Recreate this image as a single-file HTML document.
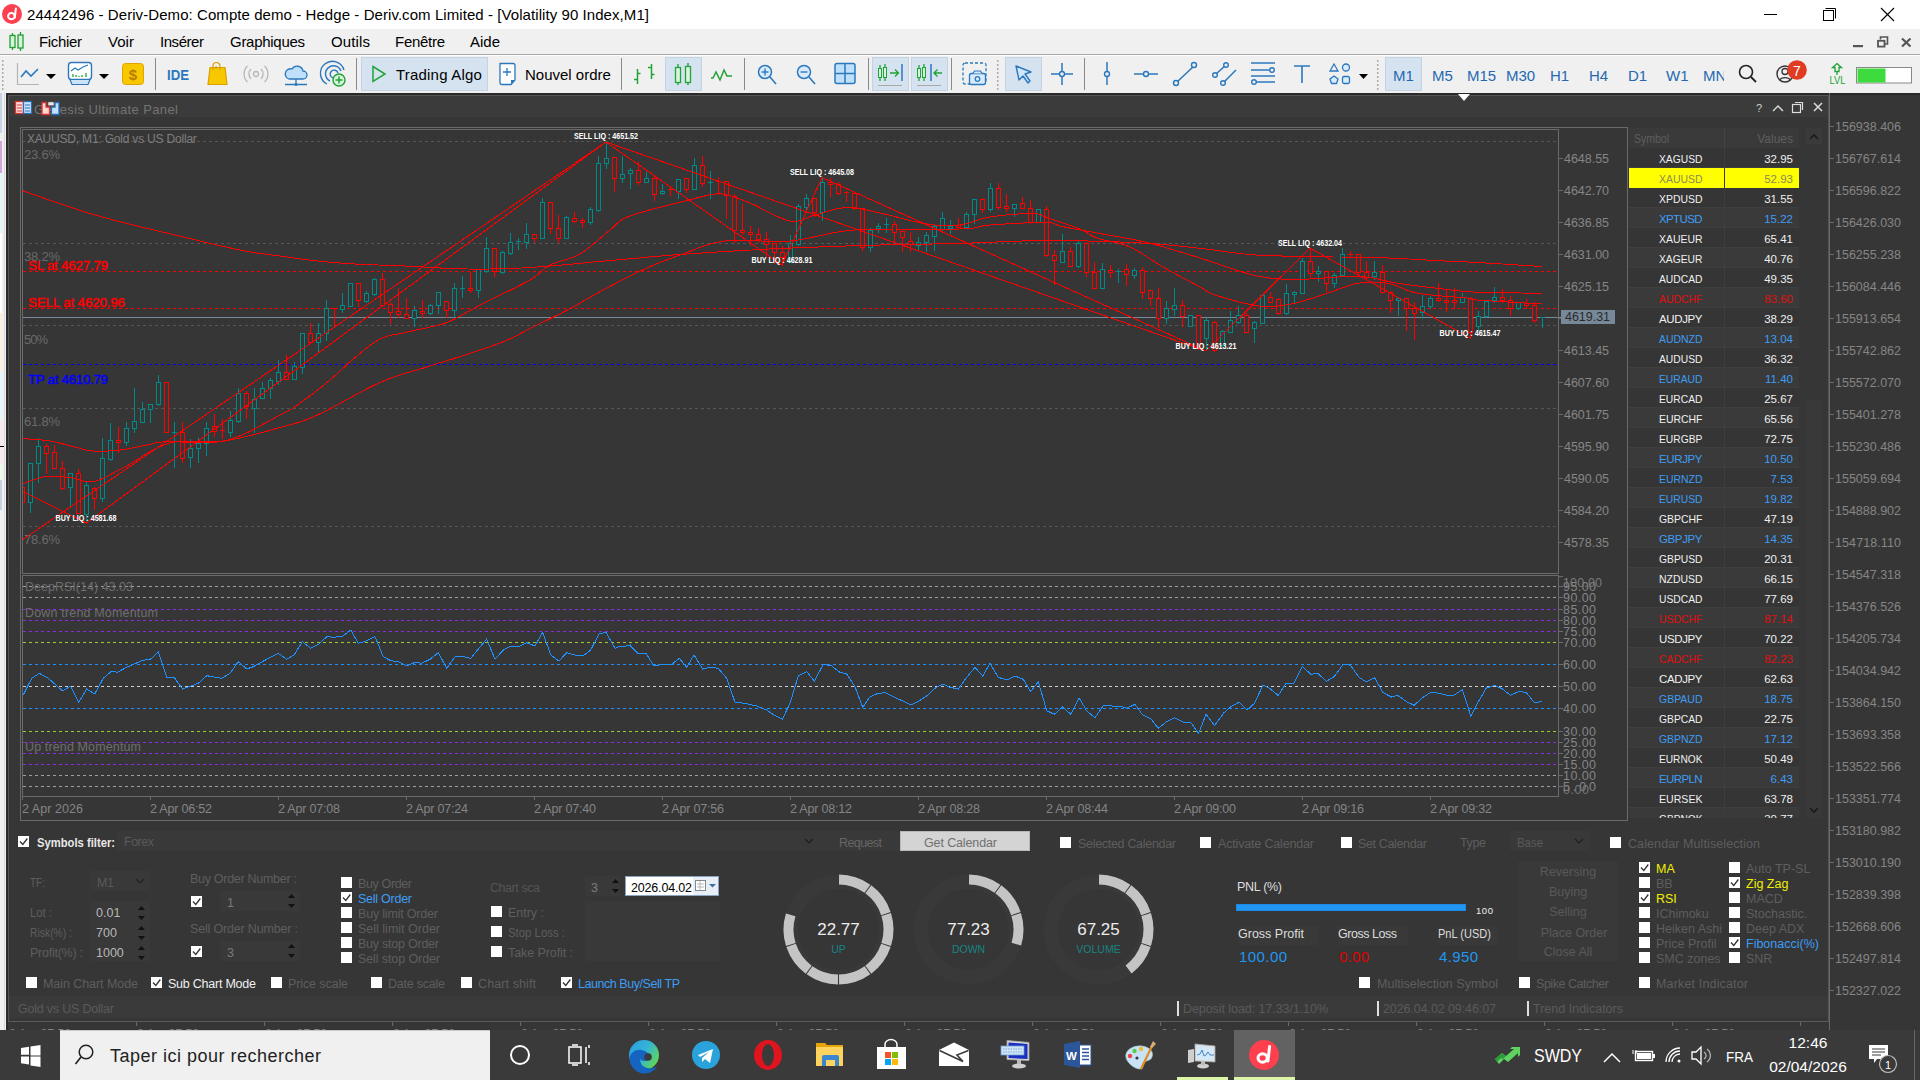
<!DOCTYPE html><html><head><meta charset="utf-8"><style>*{margin:0;padding:0}html,body{width:1920px;height:1080px;overflow:hidden;background:#2b2b2b}svg{display:block;font-family:"Liberation Sans",sans-serif}</style></head><body><svg width="1920" height="1080" viewBox="0 0 1920 1080"><rect x="0" y="0" width="1920" height="29" fill="#ffffff" />
<circle cx="12" cy="14" r="10" fill="#fe3f4e"/>
<ellipse cx="11.4" cy="16.2" rx="3.3" ry="3.1" fill="none" stroke="#fff" stroke-width="2"/><path d="M15.9 8.4L14.8 17.6" stroke="#fff" stroke-width="2" stroke-linecap="round"/>
<text x="27" y="20" font-size="15" fill="#000" letter-spacing="0.070">24442496 - Deriv-Demo: Compte demo - Hedge - Deriv.com Limited - [Volatility 90 Index,M1]</text>
<line x1="1764" y1="14.5" x2="1777" y2="14.5" stroke="#000" stroke-width="1" />
<rect x="1823.5" y="10.5" width="10" height="10" fill="none" stroke="#000" />
<path d="M1825.5 8.5h10v10" fill="none" stroke="#000"/>
<path d="M1881 8L1894 21M1894 8L1881 21" stroke="#000" stroke-width="1.1"/>
<rect x="0" y="29" width="1920" height="25" fill="#f0f0f0" />
<g stroke="#1fa030" stroke-width="1.3" fill="#d8f5dc"><line x1="12.5" y1="33" x2="12.5" y2="50"/><line x1="20.5" y1="32" x2="20.5" y2="51"/><rect x="10" y="35.5" width="5" height="12"/><rect x="18" y="35" width="5" height="13"/></g>
<text x="39" y="47" font-size="15" fill="#000" letter-spacing="-0.335">Fichier</text>
<text x="108" y="47" font-size="15" fill="#000" letter-spacing="0.050">Voir</text>
<text x="160" y="47" font-size="15" fill="#000" letter-spacing="-0.448">Insérer</text>
<text x="230" y="47" font-size="15" fill="#000" letter-spacing="-0.283">Graphiques</text>
<text x="331" y="47" font-size="15" fill="#000" letter-spacing="0.131">Outils</text>
<text x="395" y="47" font-size="15" fill="#000" letter-spacing="-0.283">Fenêtre</text>
<text x="470" y="47" font-size="15" fill="#000" letter-spacing="-0.008">Aide</text>
<rect x="1853" y="45" width="10" height="2.2" fill="#555" />
<rect x="1878" y="40.8" width="6.5" height="5.8" fill="none" stroke="#555" stroke-width="1.8"/><path d="M1880.5 39.5V37h7v7h-2.5" fill="none" stroke="#555" stroke-width="1.6"/>
<path d="M1902 38.5L1910.5 46.5M1910.5 38.5L1902 46.5" stroke="#555" stroke-width="2.2"/>
<rect x="0" y="55" width="1920" height="38" fill="#f0f0f0" />
<g transform="translate(0,55)"><rect x="361.5" y="2.5" width="126" height="33" fill="#d5e3f1" stroke="#c3d3e4"/><rect x="665.5" y="2.5" width="36" height="33" fill="#d5e3f1" stroke="#c3d3e4"/><rect x="872.5" y="2.5" width="36" height="33" fill="#d5e3f1" stroke="#c3d3e4"/><rect x="911.5" y="2.5" width="36" height="33" fill="#d5e3f1" stroke="#c3d3e4"/><rect x="1005.5" y="2.5" width="36" height="33" fill="#d5e3f1" stroke="#c3d3e4"/><rect x="1385.5" y="2.5" width="36" height="33" fill="#d5e3f1" stroke="#c3d3e4"/><rect x="2" y="5" width="1.5" height="2" fill="#aaa"/><rect x="2" y="9" width="1.5" height="2" fill="#aaa"/><rect x="2" y="13" width="1.5" height="2" fill="#aaa"/><rect x="2" y="17" width="1.5" height="2" fill="#aaa"/><rect x="2" y="21" width="1.5" height="2" fill="#aaa"/><rect x="2" y="25" width="1.5" height="2" fill="#aaa"/><rect x="2" y="29" width="1.5" height="2" fill="#aaa"/><rect x="2" y="33" width="1.5" height="2" fill="#aaa"/><rect x="997" y="5" width="1.5" height="2" fill="#aaa"/><rect x="997" y="9" width="1.5" height="2" fill="#aaa"/><rect x="997" y="13" width="1.5" height="2" fill="#aaa"/><rect x="997" y="17" width="1.5" height="2" fill="#aaa"/><rect x="997" y="21" width="1.5" height="2" fill="#aaa"/><rect x="997" y="25" width="1.5" height="2" fill="#aaa"/><rect x="997" y="29" width="1.5" height="2" fill="#aaa"/><rect x="997" y="33" width="1.5" height="2" fill="#aaa"/><rect x="1377" y="5" width="1.5" height="2" fill="#aaa"/><rect x="1377" y="9" width="1.5" height="2" fill="#aaa"/><rect x="1377" y="13" width="1.5" height="2" fill="#aaa"/><rect x="1377" y="17" width="1.5" height="2" fill="#aaa"/><rect x="1377" y="21" width="1.5" height="2" fill="#aaa"/><rect x="1377" y="25" width="1.5" height="2" fill="#aaa"/><rect x="1377" y="29" width="1.5" height="2" fill="#aaa"/><rect x="1377" y="33" width="1.5" height="2" fill="#aaa"/><line x1="155.5" y1="3" x2="155.5" y2="35" stroke="#8a8a8a"/><line x1="356.5" y1="3" x2="356.5" y2="35" stroke="#8a8a8a"/><line x1="621.5" y1="3" x2="621.5" y2="35" stroke="#8a8a8a"/><line x1="744.5" y1="3" x2="744.5" y2="35" stroke="#8a8a8a"/><line x1="868.5" y1="3" x2="868.5" y2="35" stroke="#8a8a8a"/><line x1="951.5" y1="3" x2="951.5" y2="35" stroke="#8a8a8a"/><line x1="1084.5" y1="3" x2="1084.5" y2="35" stroke="#8a8a8a"/><path d="M17.5 8V29.5H39" fill="none" stroke="#b4b4b4" stroke-width="1.2"/><path d="M21 22L26 16L31 21L38 14" fill="none" stroke="#2c78bd" stroke-width="1.6"/><path d="M46 19h10l-5 5z" fill="#000"/><rect x="68.5" y="7.5" width="23" height="17" rx="3" fill="#fff" stroke="#2c78bd" stroke-width="1.4"/><path d="M71 16l4-3 3 2 5-3 5-2" fill="none" stroke="#2c78bd" stroke-width="1.2"/><path d="M73 22v-3M76 22v-2M79 22v-1M82 22v-2M86 22v-4" stroke="#21a336" stroke-width="1.3"/><path d="M70 24.5h20l-2 5h-16z" fill="#cde3f7" stroke="#2c78bd" stroke-width="1.2"/><path d="M99 19h10l-5 5z" fill="#000"/><rect x="122.5" y="8.5" width="21" height="21" rx="3" fill="#f7c800" stroke="#e0a400"/><text x="133" y="25" font-size="15" font-weight="bold" text-anchor="middle" fill="#b87d00">$</text><text x="167" y="25" font-size="14" font-weight="bold" fill="#2c78bd" textLength="22" lengthAdjust="spacingAndGlyphs">IDE</text><path d="M208 29.5L210 12.5H225L227 29.5Z" fill="#f7c800" stroke="#d9a000" stroke-width="1.2"/><path d="M213 15V11a3.5 3.5 0 0 1 7 0V15M216 14V11" fill="none" stroke="#d9a000" stroke-width="1.2"/><circle cx="256" cy="19" r="2.5" fill="none" stroke="#b8b8b8" stroke-width="1.3"/><path d="M251 14a7 7 0 0 0 0 10M261 14a7 7 0 0 1 0 10M247.5 11a11 11 0 0 0 0 16M264.5 11a11 11 0 0 1 0 16" fill="none" stroke="#b8b8b8" stroke-width="1.3"/><path d="M289 24h14a4 4 0 0 0 0-8a6 6 0 0 0-11-2a4 4 0 0 0-3 10z" fill="#bfe0fa" stroke="#2c78bd" stroke-width="1.3"/><path d="M296 24v5M285 29.5h22" stroke="#2c78bd" stroke-width="1.3"/><circle cx="296" cy="29.5" r="1.5" fill="#2c78bd"/><path d="M333 23a4 4 0 1 1 5-5M330 26a8 8 0 1 1 11-10M327 29a12 12 0 1 1 17-14" fill="none" stroke="#2c78bd" stroke-width="1.4"/><circle cx="339" cy="25" r="6" fill="#d7f5dc" stroke="#21a336" stroke-width="1.4"/><path d="M339 21.5v7M335.5 25h7" stroke="#21a336" stroke-width="1.5"/><path d="M373 11.5L385 19L373 26.5Z" fill="none" stroke="#21a336" stroke-width="1.5"/><text x="396" y="25" font-size="15" fill="#000" letter-spacing="0.2">Trading Algo</text><path d="M500 8.5h13a2 2 0 0 1 2 2V25l-4 4.5h-9a2 2 0 0 1-2-2z" fill="#fff" stroke="#2c78bd" stroke-width="1.3"/><path d="M507 13v8M503 17h8" stroke="#2c78bd" stroke-width="1.3"/><path d="M511 29.5l4-4.5h-4z" fill="#2c78bd"/><text x="525" y="25" font-size="15" fill="#000">Nouvel ordre</text><path d="M637.5 14v15M634 24.5h3.5M637.5 18.5h3M651.5 9v15M648 12.5h3.5M651.5 19.5h3" stroke="#21a336" stroke-width="1.5" fill="none"/><path d="M678 9v21M688 8v22" stroke="#21a336" stroke-width="1.4"/><rect x="675.5" y="12.5" width="5" height="15" fill="#d7f5dc" stroke="#21a336" stroke-width="1.3"/><rect x="685.5" y="11.5" width="5" height="16" fill="#d7f5dc" stroke="#21a336" stroke-width="1.3"/><path d="M711 23h2l3-6 4 8 4-10 3 6h5" fill="none" stroke="#21a336" stroke-width="1.5"/><circle cx="765" cy="17" r="6.5" fill="#d7ebfb" stroke="#2c78bd" stroke-width="1.5"/><path d="M770 22l6 7" stroke="#2c78bd" stroke-width="1.6"/><path d="M761.5 17h7" stroke="#2c78bd" stroke-width="1.4"/><path d="M765 13.5v7" stroke="#2c78bd" stroke-width="1.4"/><circle cx="804" cy="17" r="6.5" fill="#d7ebfb" stroke="#2c78bd" stroke-width="1.5"/><path d="M809 22l6 7" stroke="#2c78bd" stroke-width="1.6"/><path d="M800.5 17h7" stroke="#2c78bd" stroke-width="1.4"/><rect x="835" y="8.5" width="20" height="20" rx="2" fill="#bfe0fa" stroke="#2c78bd" stroke-width="1.5"/><path d="M845 8.5v20M835 18.5h20" stroke="#2c78bd" stroke-width="1.5"/><path d="M880 10v16M885 9v17" stroke="#21a336" stroke-width="1.3"/><rect x="878.5" y="13.5" width="3" height="9" fill="#d7f5dc" stroke="#21a336"/><rect x="883.5" y="12.5" width="3" height="10" fill="#d7f5dc" stroke="#21a336"/><path d="M878 30.5h24" stroke="#a8a8a8"/><path d="M890 18h8M895 14.5l3.5 3.5l-3.5 3.5" fill="none" stroke="#21a336" stroke-width="1.4"/><path d="M902 9v17" stroke="#2c78bd" stroke-width="1.5"/><path d="M919 10v16M924 9v17" stroke="#21a336" stroke-width="1.3"/><rect x="917.5" y="13.5" width="3" height="9" fill="#d7f5dc" stroke="#21a336"/><rect x="922.5" y="12.5" width="3" height="10" fill="#d7f5dc" stroke="#21a336"/><path d="M917 30.5h24" stroke="#a8a8a8"/><path d="M931 9v17" stroke="#2c78bd" stroke-width="1.5"/><path d="M934 18h8M937.5 14.5l-3.5 3.5l3.5 3.5" fill="none" stroke="#21a336" stroke-width="1.4"/><rect x="963" y="8" width="23" height="21" rx="2" fill="none" stroke="#2c78bd" stroke-width="1.3" stroke-dasharray="3 2"/><rect x="969.5" y="18.5" width="16" height="11" rx="2" fill="#d7ebfb" stroke="#2c78bd" stroke-width="1.3"/><path d="M973 18.5l1.5-2.5h6l1.5 2.5" fill="#d7ebfb" stroke="#2c78bd" stroke-width="1.2"/><circle cx="977.5" cy="24" r="2.3" fill="none" stroke="#2c78bd" stroke-width="1.2"/><path d="M1016 11L1031 17L1025 19L1030 26L1028 28L1023 21L1019 25Z" fill="#cfe6fb" stroke="#2c78bd" stroke-width="1.4" stroke-linejoin="round"/><path d="M1062 8v22M1051 19h22" stroke="#2c78bd" stroke-width="1.5"/><circle cx="1062" cy="19" r="2.5" fill="#f0f0f0" stroke="#2c78bd" stroke-width="1.4"/><path d="M1107 7v23" stroke="#2c78bd" stroke-width="1.5"/><circle cx="1107" cy="19" r="2.5" fill="#f0f0f0" stroke="#2c78bd" stroke-width="1.4"/><path d="M1134 19h24" stroke="#2c78bd" stroke-width="1.5"/><circle cx="1146" cy="19" r="2.5" fill="#f0f0f0" stroke="#2c78bd" stroke-width="1.4"/><path d="M1177 27L1194 11" stroke="#2c78bd" stroke-width="1.5"/><circle cx="1176" cy="28" r="2.5" fill="#f0f0f0" stroke="#2c78bd" stroke-width="1.4"/><circle cx="1194" cy="10" r="2.5" fill="#f0f0f0" stroke="#2c78bd" stroke-width="1.4"/><path d="M1216 19L1226 10M1224 27L1236 15" stroke="#2c78bd" stroke-width="1.5"/><circle cx="1215" cy="20" r="2.3" fill="#f0f0f0" stroke="#2c78bd" stroke-width="1.4"/><circle cx="1226" cy="10" r="2.3" fill="#f0f0f0" stroke="#2c78bd" stroke-width="1.4"/><circle cx="1223" cy="28" r="2.3" fill="#f0f0f0" stroke="#2c78bd" stroke-width="1.4"/><path d="M1251 8h24M1251 15h20M1251 21h24M1254 27h21" stroke="#2c78bd" stroke-width="1.5"/><circle cx="1272" cy="15" r="2.3" fill="#f0f0f0" stroke="#2c78bd" stroke-width="1.4"/><circle cx="1254" cy="27" r="2.3" fill="#f0f0f0" stroke="#2c78bd" stroke-width="1.4"/><path d="M1294 11h16M1302 11v17" stroke="#2c78bd" stroke-width="1.6"/><path d="M1334 9l4 7h-8z" fill="none" stroke="#2c78bd" stroke-width="1.3"/><circle cx="1346" cy="12.5" r="3.5" fill="#d7ebfb" stroke="#2c78bd" stroke-width="1.3"/><path d="M1334 21l4 3-1.5 4.5h-5l-1.5-4.5z" fill="#d7ebfb" stroke="#2c78bd" stroke-width="1.3"/><rect x="1342.5" y="21.5" width="7" height="7" rx="1.5" fill="#d7ebfb" stroke="#2c78bd" stroke-width="1.3"/><path d="M1359 19h9l-4.5 5z" fill="#000"/><text x="1393" y="25.5" font-size="15" fill="#2568b0">M1</text><text x="1432" y="25.5" font-size="15" fill="#2568b0">M5</text><text x="1467" y="25.5" font-size="15" fill="#2568b0">M15</text><text x="1506" y="25.5" font-size="15" fill="#2568b0">M30</text><text x="1550" y="25.5" font-size="15" fill="#2568b0">H1</text><text x="1589" y="25.5" font-size="15" fill="#2568b0">H4</text><text x="1628" y="25.5" font-size="15" fill="#2568b0">D1</text><text x="1666" y="25.5" font-size="15" fill="#2568b0">W1</text><text x="1703" y="25.5" font-size="15" fill="#2568b0">MN</text><rect x="1724" y="5" width="8" height="28" fill="#f0f0f0"/><circle cx="1746" cy="17" r="6.5" fill="none" stroke="#222" stroke-width="1.6"/><path d="M1751 22l5 5" stroke="#222" stroke-width="1.8"/><circle cx="1785" cy="19" r="8" fill="none" stroke="#333" stroke-width="1.4"/><circle cx="1785" cy="16.5" r="3" fill="none" stroke="#333" stroke-width="1.3"/><path d="M1779.5 25a6 4 0 0 1 11 0" fill="none" stroke="#333" stroke-width="1.3"/><circle cx="1797" cy="15" r="9.8" fill="#e03c24"/><text x="1797" y="20.5" font-size="14" text-anchor="middle" fill="#fff">7</text><path d="M1837 8.5l4.5 4h-2.5v4h-4v-4h-2.5z" fill="none" stroke="#21a336" stroke-width="1.3"/><path d="M1837 17v3" stroke="#21a336" stroke-width="1.3"/><text x="1837.5" y="29" font-size="10" text-anchor="middle" fill="#21a336" textLength="16" lengthAdjust="spacingAndGlyphs">LVL</text><rect x="1856.5" y="12.5" width="55" height="15.5" fill="#fff" stroke="#888"/><rect x="1857.5" y="13.5" width="28" height="14" fill="#3ddb3d"/></g>
<line x1="0" y1="54.5" x2="1920" y2="54.5" stroke="#a8a8a8" stroke-width="1" />
<line x1="0" y1="55.5" x2="1920" y2="55.5" stroke="#ffffff" stroke-width="1" />
<rect x="0" y="93" width="1920" height="937" fill="#363636" />
<rect x="0" y="93" width="1920" height="2" fill="#2a2a2a" />
<rect x="5" y="95" width="3" height="935" fill="#2a2a2a" />
<rect x="0" y="93" width="6" height="937" fill="#f0f0f0" />
<rect x="0" y="93" width="2" height="40" fill="#c5d5e5" />
<rect x="0" y="141" width="2" height="32" fill="#d6a5e0" />
<rect x="0" y="173" width="2" height="60" fill="#dff7f7" />
<rect x="0" y="233" width="2" height="80" fill="#ffffff" />
<rect x="0" y="313" width="2" height="58" fill="#fff0dc" />
<rect x="0" y="371" width="2" height="48" fill="#e3f9fb" />
<rect x="0" y="419" width="2" height="45" fill="#fde8ee" />
<rect x="0" y="464" width="2" height="36" fill="#eefaea" />
<rect x="0" y="480" width="2" height="30" fill="#c4d2e2" />
<line x1="0" y1="446.5" x2="5" y2="446.5" stroke="#000" stroke-width="1" />
<line x1="4.5" y1="93" x2="4.5" y2="1030" stroke="#d8d8d8" stroke-width="1" />
<line x1="1829.5" y1="93" x2="1829.5" y2="1030" stroke="#6a6a6a" stroke-width="1" />
<line x1="1830" y1="126.5" x2="1834" y2="126.5" stroke="#6a6a6a" stroke-width="1" />
<text x="1835" y="131" font-size="12.5" fill="#858585" letter-spacing="-0.005">156938.406</text>
<line x1="1830" y1="158.5" x2="1834" y2="158.5" stroke="#6a6a6a" stroke-width="1" />
<text x="1835" y="163" font-size="12.5" fill="#858585" letter-spacing="-0.005">156767.614</text>
<line x1="1830" y1="190.5" x2="1834" y2="190.5" stroke="#6a6a6a" stroke-width="1" />
<text x="1835" y="195" font-size="12.5" fill="#858585" letter-spacing="-0.005">156596.822</text>
<line x1="1830" y1="222.5" x2="1834" y2="222.5" stroke="#6a6a6a" stroke-width="1" />
<text x="1835" y="227" font-size="12.5" fill="#858585" letter-spacing="-0.005">156426.030</text>
<line x1="1830" y1="254.5" x2="1834" y2="254.5" stroke="#6a6a6a" stroke-width="1" />
<text x="1835" y="259" font-size="12.5" fill="#858585" letter-spacing="-0.005">156255.238</text>
<line x1="1830" y1="286.5" x2="1834" y2="286.5" stroke="#6a6a6a" stroke-width="1" />
<text x="1835" y="291" font-size="12.5" fill="#858585" letter-spacing="-0.005">156084.446</text>
<line x1="1830" y1="318.5" x2="1834" y2="318.5" stroke="#6a6a6a" stroke-width="1" />
<text x="1835" y="323" font-size="12.5" fill="#858585" letter-spacing="-0.005">155913.654</text>
<line x1="1830" y1="350.5" x2="1834" y2="350.5" stroke="#6a6a6a" stroke-width="1" />
<text x="1835" y="355" font-size="12.5" fill="#858585" letter-spacing="-0.005">155742.862</text>
<line x1="1830" y1="382.5" x2="1834" y2="382.5" stroke="#6a6a6a" stroke-width="1" />
<text x="1835" y="387" font-size="12.5" fill="#858585" letter-spacing="-0.005">155572.070</text>
<line x1="1830" y1="414.5" x2="1834" y2="414.5" stroke="#6a6a6a" stroke-width="1" />
<text x="1835" y="419" font-size="12.5" fill="#858585" letter-spacing="-0.005">155401.278</text>
<line x1="1830" y1="446.5" x2="1834" y2="446.5" stroke="#6a6a6a" stroke-width="1" />
<text x="1835" y="451" font-size="12.5" fill="#858585" letter-spacing="-0.005">155230.486</text>
<line x1="1830" y1="478.5" x2="1834" y2="478.5" stroke="#6a6a6a" stroke-width="1" />
<text x="1835" y="483" font-size="12.5" fill="#858585" letter-spacing="-0.005">155059.694</text>
<line x1="1830" y1="510.5" x2="1834" y2="510.5" stroke="#6a6a6a" stroke-width="1" />
<text x="1835" y="515" font-size="12.5" fill="#858585" letter-spacing="-0.005">154888.902</text>
<line x1="1830" y1="542.5" x2="1834" y2="542.5" stroke="#6a6a6a" stroke-width="1" />
<text x="1835" y="547" font-size="12.5" fill="#858585" letter-spacing="0.098">154718.110</text>
<line x1="1830" y1="574.5" x2="1834" y2="574.5" stroke="#6a6a6a" stroke-width="1" />
<text x="1835" y="579" font-size="12.5" fill="#858585" letter-spacing="-0.005">154547.318</text>
<line x1="1830" y1="606.5" x2="1834" y2="606.5" stroke="#6a6a6a" stroke-width="1" />
<text x="1835" y="611" font-size="12.5" fill="#858585" letter-spacing="-0.005">154376.526</text>
<line x1="1830" y1="638.5" x2="1834" y2="638.5" stroke="#6a6a6a" stroke-width="1" />
<text x="1835" y="643" font-size="12.5" fill="#858585" letter-spacing="-0.005">154205.734</text>
<line x1="1830" y1="670.5" x2="1834" y2="670.5" stroke="#6a6a6a" stroke-width="1" />
<text x="1835" y="675" font-size="12.5" fill="#858585" letter-spacing="-0.005">154034.942</text>
<line x1="1830" y1="702.5" x2="1834" y2="702.5" stroke="#6a6a6a" stroke-width="1" />
<text x="1835" y="707" font-size="12.5" fill="#858585" letter-spacing="-0.005">153864.150</text>
<line x1="1830" y1="734.5" x2="1834" y2="734.5" stroke="#6a6a6a" stroke-width="1" />
<text x="1835" y="739" font-size="12.5" fill="#858585" letter-spacing="-0.005">153693.358</text>
<line x1="1830" y1="766.5" x2="1834" y2="766.5" stroke="#6a6a6a" stroke-width="1" />
<text x="1835" y="771" font-size="12.5" fill="#858585" letter-spacing="-0.005">153522.566</text>
<line x1="1830" y1="798.5" x2="1834" y2="798.5" stroke="#6a6a6a" stroke-width="1" />
<text x="1835" y="803" font-size="12.5" fill="#858585" letter-spacing="-0.005">153351.774</text>
<line x1="1830" y1="830.5" x2="1834" y2="830.5" stroke="#6a6a6a" stroke-width="1" />
<text x="1835" y="835" font-size="12.5" fill="#858585" letter-spacing="-0.005">153180.982</text>
<line x1="1830" y1="862.5" x2="1834" y2="862.5" stroke="#6a6a6a" stroke-width="1" />
<text x="1835" y="867" font-size="12.5" fill="#858585" letter-spacing="-0.005">153010.190</text>
<line x1="1830" y1="894.5" x2="1834" y2="894.5" stroke="#6a6a6a" stroke-width="1" />
<text x="1835" y="899" font-size="12.5" fill="#858585" letter-spacing="-0.005">152839.398</text>
<line x1="1830" y1="926.5" x2="1834" y2="926.5" stroke="#6a6a6a" stroke-width="1" />
<text x="1835" y="931" font-size="12.5" fill="#858585" letter-spacing="-0.005">152668.606</text>
<line x1="1830" y1="958.5" x2="1834" y2="958.5" stroke="#6a6a6a" stroke-width="1" />
<text x="1835" y="963" font-size="12.5" fill="#858585" letter-spacing="-0.005">152497.814</text>
<line x1="1830" y1="990.5" x2="1834" y2="990.5" stroke="#6a6a6a" stroke-width="1" />
<text x="1835" y="995" font-size="12.5" fill="#858585" letter-spacing="-0.005">152327.022</text>
<rect x="8" y="1022" width="1821" height="8" fill="#363636" />
<text x="9" y="1038" font-size="12.5" fill="#808080" letter-spacing="-0.194">2 Apr 07:56</text>
<text x="137" y="1038" font-size="12.5" fill="#808080" letter-spacing="-0.194">2 Apr 07:56</text>
<text x="265" y="1038" font-size="12.5" fill="#808080" letter-spacing="-0.194">2 Apr 07:56</text>
<text x="393" y="1038" font-size="12.5" fill="#808080" letter-spacing="-0.194">2 Apr 07:56</text>
<text x="521" y="1038" font-size="12.5" fill="#808080" letter-spacing="-0.194">2 Apr 07:56</text>
<text x="649" y="1038" font-size="12.5" fill="#808080" letter-spacing="-0.194">2 Apr 07:56</text>
<text x="777" y="1038" font-size="12.5" fill="#808080" letter-spacing="-0.194">2 Apr 07:56</text>
<text x="905" y="1038" font-size="12.5" fill="#808080" letter-spacing="-0.194">2 Apr 07:56</text>
<text x="1033" y="1038" font-size="12.5" fill="#808080" letter-spacing="-0.194">2 Apr 07:56</text>
<text x="1161" y="1038" font-size="12.5" fill="#808080" letter-spacing="-0.194">2 Apr 07:56</text>
<text x="1289" y="1038" font-size="12.5" fill="#808080" letter-spacing="-0.194">2 Apr 07:56</text>
<text x="1417" y="1038" font-size="12.5" fill="#808080" letter-spacing="-0.194">2 Apr 07:56</text>
<text x="1545" y="1038" font-size="12.5" fill="#808080" letter-spacing="-0.194">2 Apr 07:56</text>
<text x="1673" y="1038" font-size="12.5" fill="#808080" letter-spacing="-0.194">2 Apr 07:56</text>
<line x1="136.5" y1="1022" x2="136.5" y2="1026" stroke="#6a6a6a" stroke-width="1" />
<line x1="264.5" y1="1022" x2="264.5" y2="1026" stroke="#6a6a6a" stroke-width="1" />
<line x1="392.5" y1="1022" x2="392.5" y2="1026" stroke="#6a6a6a" stroke-width="1" />
<line x1="520.5" y1="1022" x2="520.5" y2="1026" stroke="#6a6a6a" stroke-width="1" />
<line x1="648.5" y1="1022" x2="648.5" y2="1026" stroke="#6a6a6a" stroke-width="1" />
<line x1="776.5" y1="1022" x2="776.5" y2="1026" stroke="#6a6a6a" stroke-width="1" />
<line x1="904.5" y1="1022" x2="904.5" y2="1026" stroke="#6a6a6a" stroke-width="1" />
<line x1="1032.5" y1="1022" x2="1032.5" y2="1026" stroke="#6a6a6a" stroke-width="1" />
<line x1="1160.5" y1="1022" x2="1160.5" y2="1026" stroke="#6a6a6a" stroke-width="1" />
<line x1="1288.5" y1="1022" x2="1288.5" y2="1026" stroke="#6a6a6a" stroke-width="1" />
<line x1="1416.5" y1="1022" x2="1416.5" y2="1026" stroke="#6a6a6a" stroke-width="1" />
<line x1="1544.5" y1="1022" x2="1544.5" y2="1026" stroke="#6a6a6a" stroke-width="1" />
<line x1="1672.5" y1="1022" x2="1672.5" y2="1026" stroke="#6a6a6a" stroke-width="1" />
<line x1="1800.5" y1="1022" x2="1800.5" y2="1026" stroke="#6a6a6a" stroke-width="1" />
<rect x="8.5" y="95.5" width="1820" height="926" fill="#363636" stroke="#555555" />
<rect x="9" y="96" width="1819" height="21" fill="#3b3b3b" />
<rect x="15.5" y="101.5" width="8" height="12" fill="#fdd" stroke="#d33" stroke-width="1.3"/><rect x="23.5" y="101.5" width="8" height="12" fill="#cde6ff" stroke="#2a6db5" stroke-width="1.3"/>
<path d="M17 105h5M17 108h5M17 111h5" stroke="#d33" stroke-width="1"/><path d="M25 105h5M25 108h5M25 111h5" stroke="#2a6db5" stroke-width="1"/>
<text x="34" y="114" font-size="13" fill="#737373" letter-spacing="0.388">Genesis Ultimate Panel</text>
<path d="M42 102.5h4v4.5h3.5v7.5h-7.5z" fill="#ffd8d0" stroke="#e03030" stroke-width="1.3"/><path d="M55 102.5h4v12h-7.5v-7.5h3.5z" fill="#bfe0ff" stroke="#2a6db5" stroke-width="1.3"/><rect x="48" y="102" width="6" height="3.5" rx="1" fill="#e8e8e8" stroke="#777" stroke-width="0.6"/>
<text x="1756" y="112" font-size="11" fill="#cccccc">?</text>
<path d="M1773 111l5-5 5 5" fill="none" stroke="#ddd" stroke-width="1.4"/>
<rect x="1792.5" y="104.5" width="8" height="8" fill="none" stroke="#ddd" stroke-width="1.2"/><path d="M1795 102.5h7.5v7.5" fill="none" stroke="#ddd" stroke-width="1.2"/>
<path d="M1814 103l8 8M1822 103l-8 8" stroke="#ddd" stroke-width="1.5"/>
<path d="M1458 94h12l-6 7z" fill="#ffffff"/>
<rect x="20.5" y="127.5" width="1607" height="693" fill="none" stroke="#6a6a6a" />
<rect x="22.5" y="129.5" width="1536" height="444" fill="#363636" stroke="#6a6a6a" />
<rect x="22.5" y="575.5" width="1536" height="221" fill="#363636" stroke="#6a6a6a" />
<defs><clipPath id="cm"><rect x="23" y="130" width="1535" height="443"/></clipPath><clipPath id="cs"><rect x="23" y="576" width="1535" height="220"/></clipPath></defs>
<line x1="1559" y1="158.5" x2="1563" y2="158.5" stroke="#6a6a6a" stroke-width="1" />
<text x="1564" y="163" font-size="12.5" fill="#858585" letter-spacing="-0.031">4648.55</text>
<line x1="1559" y1="190.5" x2="1563" y2="190.5" stroke="#6a6a6a" stroke-width="1" />
<text x="1564" y="195" font-size="12.5" fill="#858585" letter-spacing="-0.031">4642.70</text>
<line x1="1559" y1="222.5" x2="1563" y2="222.5" stroke="#6a6a6a" stroke-width="1" />
<text x="1564" y="227" font-size="12.5" fill="#858585" letter-spacing="-0.031">4636.85</text>
<line x1="1559" y1="254.5" x2="1563" y2="254.5" stroke="#6a6a6a" stroke-width="1" />
<text x="1564" y="259" font-size="12.5" fill="#858585" letter-spacing="-0.031">4631.00</text>
<line x1="1559" y1="286.5" x2="1563" y2="286.5" stroke="#6a6a6a" stroke-width="1" />
<text x="1564" y="291" font-size="12.5" fill="#858585" letter-spacing="-0.031">4625.15</text>
<line x1="1559" y1="318.5" x2="1563" y2="318.5" stroke="#6a6a6a" stroke-width="1" />
<line x1="1559" y1="350.5" x2="1563" y2="350.5" stroke="#6a6a6a" stroke-width="1" />
<text x="1564" y="355" font-size="12.5" fill="#858585" letter-spacing="-0.031">4613.45</text>
<line x1="1559" y1="382.5" x2="1563" y2="382.5" stroke="#6a6a6a" stroke-width="1" />
<text x="1564" y="387" font-size="12.5" fill="#858585" letter-spacing="-0.031">4607.60</text>
<line x1="1559" y1="414.5" x2="1563" y2="414.5" stroke="#6a6a6a" stroke-width="1" />
<text x="1564" y="419" font-size="12.5" fill="#858585" letter-spacing="-0.031">4601.75</text>
<line x1="1559" y1="446.5" x2="1563" y2="446.5" stroke="#6a6a6a" stroke-width="1" />
<text x="1564" y="451" font-size="12.5" fill="#858585" letter-spacing="-0.031">4595.90</text>
<line x1="1559" y1="478.5" x2="1563" y2="478.5" stroke="#6a6a6a" stroke-width="1" />
<text x="1564" y="483" font-size="12.5" fill="#858585" letter-spacing="-0.031">4590.05</text>
<line x1="1559" y1="510.5" x2="1563" y2="510.5" stroke="#6a6a6a" stroke-width="1" />
<text x="1564" y="515" font-size="12.5" fill="#858585" letter-spacing="-0.031">4584.20</text>
<line x1="1559" y1="542.5" x2="1563" y2="542.5" stroke="#6a6a6a" stroke-width="1" />
<text x="1564" y="547" font-size="12.5" fill="#858585" letter-spacing="-0.031">4578.35</text>
<g clip-path="url(#cm)">
<line x1="23" y1="141.5" x2="1556" y2="141.5" stroke="#565656" stroke-width="1" stroke-dasharray="3 3"/>
<line x1="23" y1="243.5" x2="1556" y2="243.5" stroke="#565656" stroke-width="1" stroke-dasharray="3 3"/>
<line x1="23" y1="325.5" x2="1556" y2="325.5" stroke="#565656" stroke-width="1" stroke-dasharray="3 3"/>
<line x1="23" y1="408.5" x2="1556" y2="408.5" stroke="#565656" stroke-width="1" stroke-dasharray="3 3"/>
<line x1="23" y1="526.5" x2="1556" y2="526.5" stroke="#565656" stroke-width="1" stroke-dasharray="3 3"/>
<text x="24" y="159" font-size="13" fill="#6a6a6a" letter-spacing="-0.215">23.6%</text>
<text x="24" y="261" font-size="13" fill="#6a6a6a" letter-spacing="-0.215">38.2%</text>
<text x="24" y="344" font-size="13" fill="#6a6a6a" letter-spacing="-1.010">50%</text>
<text x="24" y="426" font-size="13" fill="#6a6a6a" letter-spacing="-0.215">61.8%</text>
<text x="24" y="544" font-size="13" fill="#6a6a6a" letter-spacing="-0.215">78.6%</text>
<text x="27" y="143" font-size="12" fill="#7e7e7e" letter-spacing="-0.197">XAUUSD, M1:  Gold vs US Dollar</text>
<line x1="23" y1="271.5" x2="1556" y2="271.5" stroke="#ff0000" stroke-width="1" stroke-dasharray="3 3"/>
<line x1="23" y1="308.5" x2="1556" y2="308.5" stroke="#ff0000" stroke-width="1" stroke-dasharray="3 3"/>
<line x1="23" y1="364.5" x2="1556" y2="364.5" stroke="#0000ff" stroke-width="1" stroke-dasharray="3 3"/>
<g stroke-width="0.45" stroke="#ff0000">
<text x="28" y="270" font-size="13.3" fill="#ff0000" letter-spacing="-0.195">SL at 4627.79</text>
<text x="28" y="307" font-size="13.3" fill="#ff0000" letter-spacing="-0.114">SELL at 4620.96</text>
</g><g stroke-width="0.45" stroke="#0000ff">
<text x="28" y="384" font-size="13.3" fill="#0000ff" letter-spacing="-0.276">TP at 4610.79</text>
</g>
<line x1="23" y1="317.5" x2="1558" y2="317.5" stroke="#778899" stroke-width="1" />
<line x1="22.5" y1="486" x2="22.5" y2="503" stroke="#ff0000"/><line x1="30.5" y1="463" x2="30.5" y2="513" stroke="#008b8b"/><line x1="38.5" y1="438" x2="38.5" y2="483" stroke="#008b8b"/><line x1="46.5" y1="444" x2="46.5" y2="474" stroke="#ff0000"/><line x1="54.5" y1="445" x2="54.5" y2="469" stroke="#ff0000"/><line x1="62.5" y1="461" x2="62.5" y2="490" stroke="#ff0000"/><line x1="70.5" y1="473" x2="70.5" y2="507" stroke="#008b8b"/><line x1="78.5" y1="469" x2="78.5" y2="514" stroke="#ff0000"/><line x1="86.5" y1="482" x2="86.5" y2="524" stroke="#008b8b"/><line x1="94.5" y1="487" x2="94.5" y2="510" stroke="#ff0000"/><line x1="102.5" y1="438" x2="102.5" y2="502" stroke="#008b8b"/><line x1="110.5" y1="423" x2="110.5" y2="461" stroke="#008b8b"/><line x1="118.5" y1="427" x2="118.5" y2="453" stroke="#ff0000"/><line x1="126.5" y1="422" x2="126.5" y2="446" stroke="#008b8b"/><line x1="134.5" y1="388" x2="134.5" y2="433" stroke="#008b8b"/><line x1="142.5" y1="402" x2="142.5" y2="423" stroke="#008b8b"/><line x1="150.5" y1="404" x2="150.5" y2="423" stroke="#008b8b"/><line x1="158.5" y1="375" x2="158.5" y2="406" stroke="#008b8b"/><line x1="166.5" y1="382" x2="166.5" y2="433" stroke="#ff0000"/><line x1="174.5" y1="422" x2="174.5" y2="468" stroke="#008b8b"/><line x1="182.5" y1="422" x2="182.5" y2="463" stroke="#ff0000"/><line x1="190.5" y1="439" x2="190.5" y2="468" stroke="#008b8b"/><line x1="198.5" y1="438" x2="198.5" y2="463" stroke="#008b8b"/><line x1="206.5" y1="422" x2="206.5" y2="456" stroke="#008b8b"/><line x1="214.5" y1="414" x2="214.5" y2="437" stroke="#ff0000"/><line x1="222.5" y1="419" x2="222.5" y2="439" stroke="#ff0000"/><line x1="230.5" y1="411" x2="230.5" y2="437" stroke="#008b8b"/><line x1="238.5" y1="388" x2="238.5" y2="423" stroke="#008b8b"/><line x1="246.5" y1="391" x2="246.5" y2="419" stroke="#ff0000"/><line x1="254.5" y1="388" x2="254.5" y2="433" stroke="#008b8b"/><line x1="262.5" y1="382" x2="262.5" y2="399" stroke="#008b8b"/><line x1="270.5" y1="378" x2="270.5" y2="399" stroke="#008b8b"/><line x1="278.5" y1="360" x2="278.5" y2="385" stroke="#008b8b"/><line x1="286.5" y1="355" x2="286.5" y2="380" stroke="#ff0000"/><line x1="294.5" y1="362" x2="294.5" y2="380" stroke="#008b8b"/><line x1="302.5" y1="333" x2="302.5" y2="374" stroke="#008b8b"/><line x1="310.5" y1="323" x2="310.5" y2="343" stroke="#ff0000"/><line x1="318.5" y1="323" x2="318.5" y2="352" stroke="#008b8b"/><line x1="326.5" y1="300" x2="326.5" y2="341" stroke="#008b8b"/><line x1="334.5" y1="308" x2="334.5" y2="328" stroke="#ff0000"/><line x1="342.5" y1="293" x2="342.5" y2="313" stroke="#008b8b"/><line x1="350.5" y1="283" x2="350.5" y2="307" stroke="#008b8b"/><line x1="358.5" y1="283" x2="358.5" y2="307" stroke="#ff0000"/><line x1="366.5" y1="291" x2="366.5" y2="303" stroke="#008b8b"/><line x1="374.5" y1="278" x2="374.5" y2="296" stroke="#008b8b"/><line x1="382.5" y1="273" x2="382.5" y2="306" stroke="#ff0000"/><line x1="390.5" y1="302" x2="390.5" y2="324" stroke="#ff0000"/><line x1="398.5" y1="288" x2="398.5" y2="318" stroke="#ff0000"/><line x1="406.5" y1="298" x2="406.5" y2="319" stroke="#ff0000"/><line x1="414.5" y1="306" x2="414.5" y2="327" stroke="#008b8b"/><line x1="422.5" y1="300" x2="422.5" y2="318" stroke="#ff0000"/><line x1="430.5" y1="304" x2="430.5" y2="315" stroke="#008b8b"/><line x1="438.5" y1="292" x2="438.5" y2="314" stroke="#008b8b"/><line x1="446.5" y1="301" x2="446.5" y2="318" stroke="#ff0000"/><line x1="454.5" y1="283" x2="454.5" y2="319" stroke="#008b8b"/><line x1="462.5" y1="276" x2="462.5" y2="298" stroke="#008b8b"/><line x1="470.5" y1="272" x2="470.5" y2="293" stroke="#ff0000"/><line x1="478.5" y1="269" x2="478.5" y2="298" stroke="#008b8b"/><line x1="486.5" y1="237" x2="486.5" y2="273" stroke="#008b8b"/><line x1="494.5" y1="248" x2="494.5" y2="277" stroke="#ff0000"/><line x1="502.5" y1="251" x2="502.5" y2="274" stroke="#008b8b"/><line x1="510.5" y1="233" x2="510.5" y2="255" stroke="#008b8b"/><line x1="518.5" y1="238" x2="518.5" y2="250" stroke="#008b8b"/><line x1="526.5" y1="223" x2="526.5" y2="249" stroke="#008b8b"/><line x1="534.5" y1="234" x2="534.5" y2="243" stroke="#ff0000"/><line x1="542.5" y1="198" x2="542.5" y2="239" stroke="#008b8b"/><line x1="550.5" y1="202" x2="550.5" y2="234" stroke="#ff0000"/><line x1="558.5" y1="215" x2="558.5" y2="243" stroke="#ff0000"/><line x1="566.5" y1="216" x2="566.5" y2="239" stroke="#008b8b"/><line x1="574.5" y1="212" x2="574.5" y2="223" stroke="#ff0000"/><line x1="582.5" y1="218" x2="582.5" y2="228" stroke="#ff0000"/><line x1="590.5" y1="207" x2="590.5" y2="225" stroke="#008b8b"/><line x1="598.5" y1="156" x2="598.5" y2="212" stroke="#008b8b"/><line x1="606.5" y1="142" x2="606.5" y2="169" stroke="#008b8b"/><line x1="614.5" y1="157" x2="614.5" y2="192" stroke="#ff0000"/><line x1="622.5" y1="156" x2="622.5" y2="183" stroke="#008b8b"/><line x1="630.5" y1="168" x2="630.5" y2="189" stroke="#008b8b"/><line x1="638.5" y1="162" x2="638.5" y2="185" stroke="#ff0000"/><line x1="646.5" y1="172" x2="646.5" y2="183" stroke="#008b8b"/><line x1="654.5" y1="176" x2="654.5" y2="201" stroke="#ff0000"/><line x1="662.5" y1="184" x2="662.5" y2="195" stroke="#008b8b"/><line x1="670.5" y1="187" x2="670.5" y2="196" stroke="#ff0000"/><line x1="678.5" y1="179" x2="678.5" y2="199" stroke="#008b8b"/><line x1="686.5" y1="178" x2="686.5" y2="193" stroke="#ff0000"/><line x1="694.5" y1="158" x2="694.5" y2="190" stroke="#008b8b"/><line x1="702.5" y1="156" x2="702.5" y2="187" stroke="#ff0000"/><line x1="710.5" y1="171" x2="710.5" y2="199" stroke="#008b8b"/><line x1="718.5" y1="177" x2="718.5" y2="195" stroke="#ff0000"/><line x1="726.5" y1="181" x2="726.5" y2="219" stroke="#ff0000"/><line x1="734.5" y1="194" x2="734.5" y2="243" stroke="#ff0000"/><line x1="742.5" y1="204" x2="742.5" y2="235" stroke="#ff0000"/><line x1="750.5" y1="226" x2="750.5" y2="246" stroke="#ff0000"/><line x1="758.5" y1="228" x2="758.5" y2="243" stroke="#ff0000"/><line x1="766.5" y1="232" x2="766.5" y2="258" stroke="#ff0000"/><line x1="774.5" y1="243" x2="774.5" y2="264" stroke="#ff0000"/><line x1="782.5" y1="246" x2="782.5" y2="266" stroke="#ff0000"/><line x1="790.5" y1="235" x2="790.5" y2="263" stroke="#008b8b"/><line x1="798.5" y1="204" x2="798.5" y2="246" stroke="#008b8b"/><line x1="806.5" y1="194" x2="806.5" y2="210" stroke="#008b8b"/><line x1="814.5" y1="198" x2="814.5" y2="217" stroke="#ff0000"/><line x1="822.5" y1="178" x2="822.5" y2="221" stroke="#008b8b"/><line x1="830.5" y1="178" x2="830.5" y2="197" stroke="#ff0000"/><line x1="838.5" y1="182" x2="838.5" y2="195" stroke="#ff0000"/><line x1="846.5" y1="191" x2="846.5" y2="202" stroke="#ff0000"/><line x1="854.5" y1="192" x2="854.5" y2="210" stroke="#ff0000"/><line x1="862.5" y1="208" x2="862.5" y2="251" stroke="#ff0000"/><line x1="870.5" y1="228" x2="870.5" y2="252" stroke="#008b8b"/><line x1="878.5" y1="223" x2="878.5" y2="233" stroke="#008b8b"/><line x1="886.5" y1="218" x2="886.5" y2="233" stroke="#008b8b"/><line x1="894.5" y1="221" x2="894.5" y2="242" stroke="#ff0000"/><line x1="902.5" y1="231" x2="902.5" y2="252" stroke="#ff0000"/><line x1="910.5" y1="232" x2="910.5" y2="252" stroke="#ff0000"/><line x1="918.5" y1="237" x2="918.5" y2="251" stroke="#008b8b"/><line x1="926.5" y1="232" x2="926.5" y2="252" stroke="#008b8b"/><line x1="934.5" y1="225" x2="934.5" y2="251" stroke="#008b8b"/><line x1="942.5" y1="212" x2="942.5" y2="231" stroke="#008b8b"/><line x1="950.5" y1="220" x2="950.5" y2="234" stroke="#008b8b"/><line x1="958.5" y1="218" x2="958.5" y2="229" stroke="#ff0000"/><line x1="966.5" y1="212" x2="966.5" y2="229" stroke="#008b8b"/><line x1="974.5" y1="199" x2="974.5" y2="224" stroke="#008b8b"/><line x1="982.5" y1="198" x2="982.5" y2="213" stroke="#ff0000"/><line x1="990.5" y1="183" x2="990.5" y2="212" stroke="#008b8b"/><line x1="998.5" y1="183" x2="998.5" y2="210" stroke="#ff0000"/><line x1="1006.5" y1="194" x2="1006.5" y2="212" stroke="#ff0000"/><line x1="1014.5" y1="204" x2="1014.5" y2="217" stroke="#008b8b"/><line x1="1022.5" y1="197" x2="1022.5" y2="209" stroke="#ff0000"/><line x1="1030.5" y1="200" x2="1030.5" y2="224" stroke="#ff0000"/><line x1="1038.5" y1="209" x2="1038.5" y2="223" stroke="#008b8b"/><line x1="1046.5" y1="206" x2="1046.5" y2="257" stroke="#ff0000"/><line x1="1054.5" y1="250" x2="1054.5" y2="285" stroke="#ff0000"/><line x1="1062.5" y1="234" x2="1062.5" y2="263" stroke="#008b8b"/><line x1="1070.5" y1="247" x2="1070.5" y2="267" stroke="#ff0000"/><line x1="1078.5" y1="240" x2="1078.5" y2="268" stroke="#008b8b"/><line x1="1086.5" y1="242" x2="1086.5" y2="277" stroke="#ff0000"/><line x1="1094.5" y1="262" x2="1094.5" y2="289" stroke="#ff0000"/><line x1="1102.5" y1="263" x2="1102.5" y2="289" stroke="#008b8b"/><line x1="1110.5" y1="265" x2="1110.5" y2="278" stroke="#ff0000"/><line x1="1118.5" y1="269" x2="1118.5" y2="283" stroke="#008b8b"/><line x1="1126.5" y1="264" x2="1126.5" y2="286" stroke="#ff0000"/><line x1="1134.5" y1="268" x2="1134.5" y2="279" stroke="#008b8b"/><line x1="1142.5" y1="267" x2="1142.5" y2="299" stroke="#ff0000"/><line x1="1150.5" y1="290" x2="1150.5" y2="306" stroke="#ff0000"/><line x1="1158.5" y1="288" x2="1158.5" y2="328" stroke="#ff0000"/><line x1="1166.5" y1="301" x2="1166.5" y2="324" stroke="#008b8b"/><line x1="1174.5" y1="288" x2="1174.5" y2="316" stroke="#008b8b"/><line x1="1182.5" y1="300" x2="1182.5" y2="327" stroke="#ff0000"/><line x1="1190.5" y1="315" x2="1190.5" y2="327" stroke="#008b8b"/><line x1="1198.5" y1="315" x2="1198.5" y2="350" stroke="#ff0000"/><line x1="1206.5" y1="318" x2="1206.5" y2="351" stroke="#008b8b"/><line x1="1214.5" y1="321" x2="1214.5" y2="352" stroke="#ff0000"/><line x1="1222.5" y1="330" x2="1222.5" y2="347" stroke="#008b8b"/><line x1="1230.5" y1="311" x2="1230.5" y2="333" stroke="#008b8b"/><line x1="1238.5" y1="306" x2="1238.5" y2="324" stroke="#008b8b"/><line x1="1246.5" y1="313" x2="1246.5" y2="333" stroke="#ff0000"/><line x1="1254.5" y1="321" x2="1254.5" y2="343" stroke="#008b8b"/><line x1="1262.5" y1="294" x2="1262.5" y2="324" stroke="#008b8b"/><line x1="1270.5" y1="292" x2="1270.5" y2="303" stroke="#ff0000"/><line x1="1278.5" y1="298" x2="1278.5" y2="315" stroke="#ff0000"/><line x1="1286.5" y1="284" x2="1286.5" y2="315" stroke="#008b8b"/><line x1="1294.5" y1="291" x2="1294.5" y2="304" stroke="#008b8b"/><line x1="1302.5" y1="258" x2="1302.5" y2="294" stroke="#008b8b"/><line x1="1310.5" y1="249" x2="1310.5" y2="277" stroke="#ff0000"/><line x1="1318.5" y1="266" x2="1318.5" y2="282" stroke="#008b8b"/><line x1="1326.5" y1="271" x2="1326.5" y2="292" stroke="#ff0000"/><line x1="1334.5" y1="273" x2="1334.5" y2="288" stroke="#008b8b"/><line x1="1342.5" y1="248" x2="1342.5" y2="276" stroke="#008b8b"/><line x1="1350.5" y1="251" x2="1350.5" y2="257" stroke="#ff0000"/><line x1="1358.5" y1="254" x2="1358.5" y2="275" stroke="#ff0000"/><line x1="1366.5" y1="261" x2="1366.5" y2="279" stroke="#ff0000"/><line x1="1374.5" y1="261" x2="1374.5" y2="280" stroke="#008b8b"/><line x1="1382.5" y1="265" x2="1382.5" y2="294" stroke="#ff0000"/><line x1="1390.5" y1="291" x2="1390.5" y2="313" stroke="#ff0000"/><line x1="1398.5" y1="298" x2="1398.5" y2="316" stroke="#008b8b"/><line x1="1406.5" y1="298" x2="1406.5" y2="331" stroke="#ff0000"/><line x1="1414.5" y1="302" x2="1414.5" y2="340" stroke="#ff0000"/><line x1="1422.5" y1="295" x2="1422.5" y2="319" stroke="#008b8b"/><line x1="1430.5" y1="296" x2="1430.5" y2="309" stroke="#008b8b"/><line x1="1438.5" y1="283" x2="1438.5" y2="302" stroke="#ff0000"/><line x1="1446.5" y1="289" x2="1446.5" y2="312" stroke="#ff0000"/><line x1="1454.5" y1="288" x2="1454.5" y2="309" stroke="#ff0000"/><line x1="1462.5" y1="293" x2="1462.5" y2="303" stroke="#008b8b"/><line x1="1470.5" y1="297" x2="1470.5" y2="339" stroke="#ff0000"/><line x1="1478.5" y1="311" x2="1478.5" y2="331" stroke="#008b8b"/><line x1="1486.5" y1="300" x2="1486.5" y2="318" stroke="#008b8b"/><line x1="1494.5" y1="287" x2="1494.5" y2="303" stroke="#008b8b"/><line x1="1502.5" y1="289" x2="1502.5" y2="303" stroke="#ff0000"/><line x1="1510.5" y1="296" x2="1510.5" y2="316" stroke="#ff0000"/><line x1="1518.5" y1="302" x2="1518.5" y2="310" stroke="#008b8b"/><line x1="1526.5" y1="299" x2="1526.5" y2="309" stroke="#ff0000"/><line x1="1534.5" y1="302" x2="1534.5" y2="323" stroke="#ff0000"/><line x1="1542.5" y1="317" x2="1542.5" y2="328" stroke="#008b8b"/>
<rect x="20.5" y="487.5" width="4" height="15" fill="#363636" stroke="#ff0000"/><rect x="28.5" y="463.5" width="4" height="39" fill="#363636" stroke="#008b8b"/><rect x="36.5" y="446.5" width="4" height="17" fill="#363636" stroke="#008b8b"/><rect x="44.5" y="446.5" width="4" height="7" fill="#363636" stroke="#ff0000"/><rect x="52.5" y="452.5" width="4" height="16" fill="#363636" stroke="#ff0000"/><rect x="60.5" y="468.5" width="4" height="20" fill="#363636" stroke="#ff0000"/><rect x="68.5" y="473.5" width="4" height="14" fill="#363636" stroke="#008b8b"/><rect x="76.5" y="473.5" width="4" height="40" fill="#363636" stroke="#ff0000"/><rect x="84.5" y="485.5" width="4" height="29" fill="#363636" stroke="#008b8b"/><rect x="92.5" y="488.5" width="4" height="10" fill="#363636" stroke="#ff0000"/><rect x="100.5" y="458.5" width="4" height="40" fill="#363636" stroke="#008b8b"/><rect x="108.5" y="440.5" width="4" height="19" fill="#363636" stroke="#008b8b"/><rect x="116.5" y="440.5" width="4" height="2" fill="#363636" stroke="#ff0000"/><rect x="124.5" y="428.5" width="4" height="14" fill="#363636" stroke="#008b8b"/><rect x="132.5" y="421.5" width="4" height="7" fill="#363636" stroke="#008b8b"/><rect x="140.5" y="409.5" width="4" height="13" fill="#363636" stroke="#008b8b"/><rect x="148.5" y="404.5" width="4" height="5" fill="#363636" stroke="#008b8b"/><rect x="156.5" y="382.5" width="4" height="22" fill="#363636" stroke="#008b8b"/><rect x="164.5" y="382.5" width="4" height="50" fill="#363636" stroke="#ff0000"/><line x1="172" y1="432.5" x2="177" y2="432.5" stroke="#008b8b"/><rect x="180.5" y="432.5" width="4" height="26" fill="#363636" stroke="#ff0000"/><rect x="188.5" y="448.5" width="4" height="9" fill="#363636" stroke="#008b8b"/><rect x="196.5" y="443.5" width="4" height="5" fill="#363636" stroke="#008b8b"/><rect x="204.5" y="428.5" width="4" height="15" fill="#363636" stroke="#008b8b"/><rect x="212.5" y="426.5" width="4" height="5" fill="#363636" stroke="#ff0000"/><line x1="220" y1="430.5" x2="225" y2="430.5" stroke="#ff0000"/><rect x="228.5" y="420.5" width="4" height="12" fill="#363636" stroke="#008b8b"/><rect x="236.5" y="393.5" width="4" height="28" fill="#363636" stroke="#008b8b"/><rect x="244.5" y="393.5" width="4" height="13" fill="#363636" stroke="#ff0000"/><rect x="252.5" y="399.5" width="4" height="9" fill="#363636" stroke="#008b8b"/><rect x="260.5" y="388.5" width="4" height="10" fill="#363636" stroke="#008b8b"/><rect x="268.5" y="380.5" width="4" height="8" fill="#363636" stroke="#008b8b"/><rect x="276.5" y="372.5" width="4" height="9" fill="#363636" stroke="#008b8b"/><rect x="284.5" y="372.5" width="4" height="7" fill="#363636" stroke="#ff0000"/><rect x="292.5" y="366.5" width="4" height="13" fill="#363636" stroke="#008b8b"/><rect x="300.5" y="333.5" width="4" height="34" fill="#363636" stroke="#008b8b"/><rect x="308.5" y="333.5" width="4" height="9" fill="#363636" stroke="#ff0000"/><rect x="316.5" y="333.5" width="4" height="9" fill="#363636" stroke="#008b8b"/><rect x="324.5" y="308.5" width="4" height="25" fill="#363636" stroke="#008b8b"/><line x1="332" y1="308.5" x2="337" y2="308.5" stroke="#ff0000"/><rect x="340.5" y="305.5" width="4" height="4" fill="#363636" stroke="#008b8b"/><rect x="348.5" y="283.5" width="4" height="23" fill="#363636" stroke="#008b8b"/><rect x="356.5" y="283.5" width="4" height="17" fill="#363636" stroke="#ff0000"/><rect x="364.5" y="293.5" width="4" height="8" fill="#363636" stroke="#008b8b"/><rect x="372.5" y="279.5" width="4" height="15" fill="#363636" stroke="#008b8b"/><rect x="380.5" y="279.5" width="4" height="26" fill="#363636" stroke="#ff0000"/><rect x="388.5" y="304.5" width="4" height="8" fill="#363636" stroke="#ff0000"/><rect x="396.5" y="311.5" width="4" height="3" fill="#363636" stroke="#ff0000"/><rect x="404.5" y="314.5" width="4" height="4" fill="#363636" stroke="#ff0000"/><rect x="412.5" y="310.5" width="4" height="8" fill="#363636" stroke="#008b8b"/><rect x="420.5" y="311.5" width="4" height="2" fill="#363636" stroke="#ff0000"/><rect x="428.5" y="305.5" width="4" height="8" fill="#363636" stroke="#008b8b"/><rect x="436.5" y="292.5" width="4" height="13" fill="#363636" stroke="#008b8b"/><rect x="444.5" y="301.5" width="4" height="9" fill="#363636" stroke="#ff0000"/><rect x="452.5" y="288.5" width="4" height="22" fill="#363636" stroke="#008b8b"/><line x1="460" y1="288.5" x2="465" y2="288.5" stroke="#008b8b"/><rect x="468.5" y="288.5" width="4" height="2" fill="#363636" stroke="#ff0000"/><rect x="476.5" y="269.5" width="4" height="21" fill="#363636" stroke="#008b8b"/><rect x="484.5" y="248.5" width="4" height="23" fill="#363636" stroke="#008b8b"/><rect x="492.5" y="248.5" width="4" height="23" fill="#363636" stroke="#ff0000"/><rect x="500.5" y="252.5" width="4" height="20" fill="#363636" stroke="#008b8b"/><rect x="508.5" y="242.5" width="4" height="11" fill="#363636" stroke="#008b8b"/><line x1="516" y1="241.5" x2="521" y2="241.5" stroke="#008b8b"/><rect x="524.5" y="234.5" width="4" height="8" fill="#363636" stroke="#008b8b"/><rect x="532.5" y="234.5" width="4" height="4" fill="#363636" stroke="#ff0000"/><rect x="540.5" y="202.5" width="4" height="36" fill="#363636" stroke="#008b8b"/><rect x="548.5" y="202.5" width="4" height="26" fill="#363636" stroke="#ff0000"/><rect x="556.5" y="228.5" width="4" height="10" fill="#363636" stroke="#ff0000"/><rect x="564.5" y="217.5" width="4" height="21" fill="#363636" stroke="#008b8b"/><rect x="572.5" y="218.5" width="4" height="3" fill="#363636" stroke="#ff0000"/><rect x="580.5" y="220.5" width="4" height="2" fill="#363636" stroke="#ff0000"/><rect x="588.5" y="209.5" width="4" height="13" fill="#363636" stroke="#008b8b"/><rect x="596.5" y="163.5" width="4" height="47" fill="#363636" stroke="#008b8b"/><rect x="604.5" y="158.5" width="4" height="5" fill="#363636" stroke="#008b8b"/><rect x="612.5" y="157.5" width="4" height="21" fill="#363636" stroke="#ff0000"/><rect x="620.5" y="174.5" width="4" height="4" fill="#363636" stroke="#008b8b"/><rect x="628.5" y="170.5" width="4" height="3" fill="#363636" stroke="#008b8b"/><rect x="636.5" y="170.5" width="4" height="12" fill="#363636" stroke="#ff0000"/><rect x="644.5" y="178.5" width="4" height="4" fill="#363636" stroke="#008b8b"/><rect x="652.5" y="178.5" width="4" height="16" fill="#363636" stroke="#ff0000"/><rect x="660.5" y="191.5" width="4" height="2" fill="#363636" stroke="#008b8b"/><line x1="668" y1="189.5" x2="673" y2="189.5" stroke="#ff0000"/><rect x="676.5" y="179.5" width="4" height="12" fill="#363636" stroke="#008b8b"/><rect x="684.5" y="178.5" width="4" height="11" fill="#363636" stroke="#ff0000"/><rect x="692.5" y="165.5" width="4" height="24" fill="#363636" stroke="#008b8b"/><rect x="700.5" y="165.5" width="4" height="18" fill="#363636" stroke="#ff0000"/><line x1="708" y1="182.5" x2="713" y2="182.5" stroke="#008b8b"/><line x1="716" y1="181.5" x2="721" y2="181.5" stroke="#ff0000"/><rect x="724.5" y="181.5" width="4" height="14" fill="#363636" stroke="#ff0000"/><rect x="732.5" y="196.5" width="4" height="34" fill="#363636" stroke="#ff0000"/><rect x="740.5" y="230.5" width="4" height="2" fill="#363636" stroke="#ff0000"/><rect x="748.5" y="232.5" width="4" height="2" fill="#363636" stroke="#ff0000"/><rect x="756.5" y="234.5" width="4" height="5" fill="#363636" stroke="#ff0000"/><rect x="764.5" y="239.5" width="4" height="5" fill="#363636" stroke="#ff0000"/><rect x="772.5" y="243.5" width="4" height="9" fill="#363636" stroke="#ff0000"/><rect x="780.5" y="252.5" width="4" height="5" fill="#363636" stroke="#ff0000"/><rect x="788.5" y="243.5" width="4" height="19" fill="#363636" stroke="#008b8b"/><rect x="796.5" y="206.5" width="4" height="38" fill="#363636" stroke="#008b8b"/><rect x="804.5" y="198.5" width="4" height="9" fill="#363636" stroke="#008b8b"/><rect x="812.5" y="198.5" width="4" height="14" fill="#363636" stroke="#ff0000"/><rect x="820.5" y="182.5" width="4" height="30" fill="#363636" stroke="#008b8b"/><rect x="828.5" y="182.5" width="4" height="2" fill="#363636" stroke="#ff0000"/><rect x="836.5" y="184.5" width="4" height="9" fill="#363636" stroke="#ff0000"/><line x1="844" y1="192.5" x2="849" y2="192.5" stroke="#ff0000"/><rect x="852.5" y="193.5" width="4" height="15" fill="#363636" stroke="#ff0000"/><rect x="860.5" y="208.5" width="4" height="39" fill="#363636" stroke="#ff0000"/><rect x="868.5" y="230.5" width="4" height="17" fill="#363636" stroke="#008b8b"/><rect x="876.5" y="226.5" width="4" height="2" fill="#363636" stroke="#008b8b"/><line x1="884" y1="224.5" x2="889" y2="224.5" stroke="#008b8b"/><rect x="892.5" y="224.5" width="4" height="8" fill="#363636" stroke="#ff0000"/><rect x="900.5" y="231.5" width="4" height="6" fill="#363636" stroke="#ff0000"/><rect x="908.5" y="241.5" width="4" height="3" fill="#363636" stroke="#ff0000"/><rect x="916.5" y="242.5" width="4" height="3" fill="#363636" stroke="#008b8b"/><rect x="924.5" y="235.5" width="4" height="7" fill="#363636" stroke="#008b8b"/><rect x="932.5" y="226.5" width="4" height="10" fill="#363636" stroke="#008b8b"/><rect x="940.5" y="218.5" width="4" height="11" fill="#363636" stroke="#008b8b"/><rect x="948.5" y="226.5" width="4" height="2" fill="#363636" stroke="#008b8b"/><rect x="956.5" y="225.5" width="4" height="2" fill="#363636" stroke="#ff0000"/><rect x="964.5" y="214.5" width="4" height="13" fill="#363636" stroke="#008b8b"/><rect x="972.5" y="199.5" width="4" height="15" fill="#363636" stroke="#008b8b"/><rect x="980.5" y="199.5" width="4" height="10" fill="#363636" stroke="#ff0000"/><rect x="988.5" y="188.5" width="4" height="21" fill="#363636" stroke="#008b8b"/><rect x="996.5" y="188.5" width="4" height="19" fill="#363636" stroke="#ff0000"/><rect x="1004.5" y="206.5" width="4" height="2" fill="#363636" stroke="#ff0000"/><rect x="1012.5" y="204.5" width="4" height="4" fill="#363636" stroke="#008b8b"/><rect x="1020.5" y="203.5" width="4" height="5" fill="#363636" stroke="#ff0000"/><rect x="1028.5" y="208.5" width="4" height="14" fill="#363636" stroke="#ff0000"/><rect x="1036.5" y="209.5" width="4" height="13" fill="#363636" stroke="#008b8b"/><rect x="1044.5" y="209.5" width="4" height="46" fill="#363636" stroke="#ff0000"/><rect x="1052.5" y="255.5" width="4" height="5" fill="#363636" stroke="#ff0000"/><rect x="1060.5" y="251.5" width="4" height="11" fill="#363636" stroke="#008b8b"/><rect x="1068.5" y="251.5" width="4" height="15" fill="#363636" stroke="#ff0000"/><rect x="1076.5" y="243.5" width="4" height="23" fill="#363636" stroke="#008b8b"/><rect x="1084.5" y="243.5" width="4" height="29" fill="#363636" stroke="#ff0000"/><rect x="1092.5" y="272.5" width="4" height="16" fill="#363636" stroke="#ff0000"/><rect x="1100.5" y="269.5" width="4" height="19" fill="#363636" stroke="#008b8b"/><rect x="1108.5" y="270.5" width="4" height="2" fill="#363636" stroke="#ff0000"/><line x1="1116" y1="271.5" x2="1121" y2="271.5" stroke="#008b8b"/><rect x="1124.5" y="269.5" width="4" height="5" fill="#363636" stroke="#ff0000"/><rect x="1132.5" y="270.5" width="4" height="5" fill="#363636" stroke="#008b8b"/><rect x="1140.5" y="270.5" width="4" height="22" fill="#363636" stroke="#ff0000"/><rect x="1148.5" y="290.5" width="4" height="8" fill="#363636" stroke="#ff0000"/><rect x="1156.5" y="298.5" width="4" height="20" fill="#363636" stroke="#ff0000"/><rect x="1164.5" y="308.5" width="4" height="10" fill="#363636" stroke="#008b8b"/><rect x="1172.5" y="305.5" width="4" height="4" fill="#363636" stroke="#008b8b"/><rect x="1180.5" y="305.5" width="4" height="11" fill="#363636" stroke="#ff0000"/><rect x="1188.5" y="315.5" width="4" height="11" fill="#363636" stroke="#008b8b"/><rect x="1196.5" y="315.5" width="4" height="33" fill="#363636" stroke="#ff0000"/><rect x="1204.5" y="320.5" width="4" height="18" fill="#363636" stroke="#008b8b"/><rect x="1212.5" y="322.5" width="4" height="28" fill="#363636" stroke="#ff0000"/><rect x="1220.5" y="331.5" width="4" height="14" fill="#363636" stroke="#008b8b"/><rect x="1228.5" y="320.5" width="4" height="12" fill="#363636" stroke="#008b8b"/><rect x="1236.5" y="315.5" width="4" height="7" fill="#363636" stroke="#008b8b"/><rect x="1244.5" y="315.5" width="4" height="17" fill="#363636" stroke="#ff0000"/><rect x="1252.5" y="322.5" width="4" height="6" fill="#363636" stroke="#008b8b"/><rect x="1260.5" y="295.5" width="4" height="28" fill="#363636" stroke="#008b8b"/><rect x="1268.5" y="297.5" width="4" height="5" fill="#363636" stroke="#ff0000"/><rect x="1276.5" y="299.5" width="4" height="14" fill="#363636" stroke="#ff0000"/><rect x="1284.5" y="293.5" width="4" height="20" fill="#363636" stroke="#008b8b"/><rect x="1292.5" y="292.5" width="4" height="2" fill="#363636" stroke="#008b8b"/><rect x="1300.5" y="261.5" width="4" height="32" fill="#363636" stroke="#008b8b"/><rect x="1308.5" y="261.5" width="4" height="12" fill="#363636" stroke="#ff0000"/><rect x="1316.5" y="271.5" width="4" height="2" fill="#363636" stroke="#008b8b"/><rect x="1324.5" y="271.5" width="4" height="12" fill="#363636" stroke="#ff0000"/><rect x="1332.5" y="275.5" width="4" height="8" fill="#363636" stroke="#008b8b"/><rect x="1340.5" y="254.5" width="4" height="21" fill="#363636" stroke="#008b8b"/><line x1="1348" y1="254.5" x2="1353" y2="254.5" stroke="#ff0000"/><rect x="1356.5" y="254.5" width="4" height="18" fill="#363636" stroke="#ff0000"/><rect x="1364.5" y="272.5" width="4" height="5" fill="#363636" stroke="#ff0000"/><rect x="1372.5" y="272.5" width="4" height="4" fill="#363636" stroke="#008b8b"/><rect x="1380.5" y="272.5" width="4" height="20" fill="#363636" stroke="#ff0000"/><rect x="1388.5" y="292.5" width="4" height="8" fill="#363636" stroke="#ff0000"/><rect x="1396.5" y="298.5" width="4" height="2" fill="#363636" stroke="#008b8b"/><rect x="1404.5" y="298.5" width="4" height="10" fill="#363636" stroke="#ff0000"/><rect x="1412.5" y="308.5" width="4" height="5" fill="#363636" stroke="#ff0000"/><rect x="1420.5" y="306.5" width="4" height="6" fill="#363636" stroke="#008b8b"/><rect x="1428.5" y="298.5" width="4" height="8" fill="#363636" stroke="#008b8b"/><rect x="1436.5" y="298.5" width="4" height="2" fill="#363636" stroke="#ff0000"/><rect x="1444.5" y="300.5" width="4" height="2" fill="#363636" stroke="#ff0000"/><rect x="1452.5" y="300.5" width="4" height="2" fill="#363636" stroke="#ff0000"/><rect x="1460.5" y="297.5" width="4" height="5" fill="#363636" stroke="#008b8b"/><rect x="1468.5" y="298.5" width="4" height="34" fill="#363636" stroke="#ff0000"/><rect x="1476.5" y="316.5" width="4" height="10" fill="#363636" stroke="#008b8b"/><rect x="1484.5" y="301.5" width="4" height="15" fill="#363636" stroke="#008b8b"/><rect x="1492.5" y="297.5" width="4" height="3" fill="#363636" stroke="#008b8b"/><rect x="1500.5" y="297.5" width="4" height="3" fill="#363636" stroke="#ff0000"/><rect x="1508.5" y="300.5" width="4" height="8" fill="#363636" stroke="#ff0000"/><rect x="1516.5" y="302.5" width="4" height="6" fill="#363636" stroke="#008b8b"/><rect x="1524.5" y="303.5" width="4" height="2" fill="#363636" stroke="#ff0000"/><rect x="1532.5" y="305.5" width="4" height="15" fill="#363636" stroke="#ff0000"/><line x1="1540" y1="317.5" x2="1545" y2="317.5" stroke="#008b8b"/>
<g shape-rendering="crispEdges">
<polyline points="22.0,190.5 27.6,192.4 35.0,195.0 43.7,198.1 53.5,201.5 63.9,205.1 74.5,208.6 85.0,212.0 95.0,215.0 104.8,217.7 114.9,220.4 125.1,223.0 135.5,225.6 145.8,228.1 155.9,230.5 165.7,232.8 175.0,235.0 184.0,237.2 192.9,239.3 201.6,241.4 210.0,243.4 218.1,245.3 225.9,247.0 233.2,248.6 240.0,250.0 246.2,251.2 251.8,252.2 256.9,253.0 261.7,253.6 266.3,254.2 270.8,254.8 275.3,255.4 280.0,256.0 284.8,256.7 289.6,257.4 294.2,258.0 298.9,258.7 303.5,259.3 308.2,259.9 312.8,260.5 317.5,261.0 322.1,261.5 326.6,261.9 331.0,262.3 335.5,262.7 340.0,263.0 344.7,263.4 349.7,263.7 355.0,264.0 360.6,264.3 366.3,264.5 372.3,264.8 378.4,265.0 384.8,265.2 391.3,265.5 398.1,265.7 405.0,266.0 412.2,266.4 419.7,266.8 427.5,267.2 435.5,267.7 443.5,268.2 451.6,268.5 459.6,268.8 467.5,269.0 475.2,269.1 482.8,269.1 490.4,269.0 498.0,268.8 505.6,268.6 513.5,268.3 521.6,268.0 530.0,267.5 538.8,266.9 547.9,266.2 557.2,265.4 566.7,264.6 576.3,263.7 586.0,262.7 595.5,261.8 605.0,261.0 614.3,260.2 623.6,259.3 632.9,258.5 642.2,257.7 651.5,256.8 660.9,256.0 670.4,255.2 680.0,254.5 690.0,253.8 700.5,253.1 711.2,252.4 721.9,251.7 732.3,251.1 742.3,250.5 751.6,250.0 760.0,249.5 767.1,249.1 773.0,248.8 778.1,248.6 782.8,248.3 787.5,248.2 792.5,248.0 798.2,247.8 805.0,247.5 812.9,247.2 821.5,246.9 830.6,246.6 840.1,246.2 850.0,245.9 860.0,245.6 870.0,245.3 880.0,245.0 890.1,244.8 900.6,244.5 911.2,244.3 922.0,244.2 932.7,244.0 943.2,243.8 953.3,243.5 963.0,243.3 972.3,243.0 981.3,242.7 990.0,242.3 998.6,241.9 1006.8,241.6 1014.8,241.3 1022.5,241.0 1030.0,240.8 1036.9,240.7 1043.3,240.6 1049.2,240.5 1055.0,240.5 1060.8,240.5 1066.7,240.6 1073.1,240.7 1080.0,240.8 1087.7,241.0 1095.9,241.2 1104.5,241.4 1113.3,241.7 1122.2,242.1 1130.8,242.4 1139.2,242.9 1147.0,243.3 1154.3,243.8 1161.3,244.3 1168.0,244.9 1174.5,245.6 1180.9,246.2 1187.2,246.9 1193.6,247.6 1200.0,248.3 1206.4,249.1 1212.8,249.9 1219.1,250.8 1225.3,251.6 1231.6,252.5 1237.9,253.3 1244.4,254.0 1251.0,254.6 1257.7,255.1 1264.3,255.4 1271.0,255.7 1277.8,255.9 1284.7,256.1 1291.8,256.3 1299.2,256.4 1307.0,256.6 1315.2,256.8 1324.0,256.9 1333.1,257.0 1342.3,257.0 1351.6,257.1 1360.7,257.2 1369.6,257.4 1378.0,257.6 1386.1,257.9 1394.0,258.2 1401.8,258.6 1409.4,259.0 1416.8,259.5 1423.9,259.9 1430.6,260.3 1437.0,260.6 1442.7,260.9 1447.8,261.1 1452.3,261.3 1456.6,261.5 1461.0,261.7 1465.7,261.9 1470.9,262.2 1477.0,262.5 1484.4,262.9 1493.0,263.4 1502.4,264.0 1512.0,264.6 1521.3,265.2 1529.7,265.7 1536.8,266.2 1542.0,266.5" fill="none" stroke="#ff0000" stroke-width="1" />
<polyline points="22.0,438.5 24.2,438.7 27.1,438.9 30.6,439.1 34.4,439.4 38.5,439.7 42.6,440.1 46.5,440.5 50.0,441.0 53.3,441.6 56.6,442.3 59.9,443.1 63.1,443.9 66.3,444.7 69.3,445.6 72.2,446.3 75.0,447.0 77.5,447.6 79.8,448.3 81.9,448.9 83.9,449.4 85.9,450.0 88.0,450.4 90.4,450.8 93.0,451.0 95.9,451.1 99.1,451.2 102.5,451.2 105.9,451.1 109.5,450.9 113.0,450.6 116.6,450.4 120.0,450.0 123.4,449.6 126.9,449.0 130.4,448.3 133.9,447.6 137.4,446.9 140.7,446.2 144.0,445.6 147.0,445.0 149.6,444.5 151.7,444.0 153.6,443.5 155.4,443.0 157.4,442.6 159.8,442.3 163.0,441.9 167.0,441.7 172.0,441.6 177.8,441.8 184.2,442.1 191.0,442.4 198.2,442.6 205.5,442.6 212.8,442.4 220.0,441.7 227.3,440.6 235.0,439.1 243.0,437.3 251.0,435.4 258.8,433.3 266.4,431.3 273.5,429.3 280.0,427.5 285.6,426.0 290.4,424.7 294.6,423.6 298.6,422.4 302.6,421.1 306.9,419.5 311.8,417.5 317.5,415.0 324.2,411.8 331.7,407.9 339.7,403.6 348.0,399.0 356.4,394.4 364.7,390.0 372.6,385.9 380.0,382.5 387.0,379.6 393.7,377.1 400.3,374.9 406.7,372.9 412.9,371.1 418.8,369.4 424.6,367.7 430.0,366.0 435.1,364.4 439.7,362.9 444.0,361.6 448.1,360.3 452.2,359.1 456.2,357.8 460.5,356.5 465.0,355.0 469.8,353.4 474.9,351.7 480.1,350.0 485.3,348.2 490.5,346.5 495.6,344.6 500.4,342.8 505.0,341.0 509.2,339.2 513.1,337.3 516.9,335.5 520.5,333.6 524.0,331.7 527.6,329.8 531.2,327.9 535.0,326.0 538.9,324.1 542.8,322.2 546.8,320.3 550.8,318.4 554.8,316.4 559.0,314.4 563.2,312.2 567.5,310.0 571.9,307.6 576.5,305.1 581.2,302.4 585.9,299.7 590.7,296.9 595.5,294.2 600.3,291.6 605.0,289.0 609.7,286.5 614.4,284.0 619.1,281.6 623.8,279.1 628.4,276.7 633.1,274.4 637.8,272.2 642.5,270.0 647.1,267.9 651.7,265.9 656.2,264.0 660.8,262.2 665.4,260.4 670.1,258.6 675.0,256.8 680.0,255.0 685.1,253.1 690.3,251.1 695.4,249.1 700.8,247.1 706.3,245.2 712.2,243.5 718.4,242.1 725.0,241.0 732.2,240.4 739.8,240.3 747.9,240.5 756.2,240.8 764.7,241.2 773.3,241.4 781.7,241.4 790.0,241.0 797.9,240.1 805.3,238.8 812.6,237.2 820.0,235.6 827.7,233.9 835.9,232.3 845.0,231.0 855.0,230.0 866.7,229.4 880.2,229.1 894.7,229.0 909.7,229.1 924.4,229.2 938.1,229.2 950.2,229.2 960.0,229.0 967.2,228.6 972.2,228.2 975.6,227.7 978.1,227.1 980.2,226.5 982.5,226.0 985.6,225.4 990.0,225.0 995.9,224.6 1002.9,224.1 1010.4,223.7 1018.2,223.2 1026.0,222.9 1033.3,222.6 1039.7,222.5 1045.0,222.5 1048.9,222.7 1051.7,223.0 1053.8,223.5 1055.3,224.1 1056.7,224.7 1058.2,225.3 1060.2,226.0 1063.0,226.7 1066.4,227.4 1070.0,228.1 1073.9,228.8 1078.0,229.5 1082.4,230.3 1087.0,231.2 1091.9,232.0 1097.0,233.0 1102.5,234.0 1108.3,235.0 1114.4,236.1 1120.8,237.2 1127.3,238.4 1133.9,239.6 1140.5,241.0 1147.0,242.5 1153.7,244.2 1160.8,246.2 1168.1,248.3 1175.4,250.4 1182.4,252.6 1189.0,254.6 1195.0,256.5 1200.0,258.0 1203.9,259.2 1206.8,260.1 1208.9,260.9 1210.7,261.5 1212.3,262.1 1214.1,262.7 1216.4,263.5 1219.6,264.5 1223.6,265.8 1228.0,267.3 1232.9,269.0 1238.0,270.7 1243.3,272.4 1248.6,273.9 1253.9,275.3 1259.0,276.4 1263.8,277.2 1268.5,277.9 1273.1,278.4 1277.8,278.8 1282.6,279.1 1287.6,279.3 1293.1,279.4 1299.0,279.4 1305.6,279.2 1312.9,278.8 1320.6,278.3 1328.5,277.7 1336.4,277.1 1344.1,276.6 1351.4,276.3 1358.0,276.4 1363.9,276.8 1369.4,277.5 1374.4,278.3 1379.2,279.3 1383.9,280.4 1388.5,281.5 1393.2,282.5 1398.0,283.3 1402.9,284.0 1407.8,284.7 1412.7,285.4 1417.5,286.0 1422.3,286.6 1427.2,287.2 1432.1,287.7 1437.0,288.3 1441.8,288.9 1446.3,289.4 1450.8,290.0 1455.4,290.5 1460.1,291.0 1465.2,291.5 1470.8,291.9 1477.0,292.2 1484.4,292.5 1493.0,292.7 1502.4,292.8 1512.0,292.9 1521.3,293.0 1529.7,293.1 1536.8,293.1 1542.0,293.2" fill="none" stroke="#ff0000" stroke-width="1" />
<polyline points="22.0,484.0 23.8,483.4 26.1,482.5 28.9,481.4 31.9,480.3 35.2,479.2 38.6,478.1 41.9,477.3 45.0,476.7 48.0,476.4 51.2,476.3 54.3,476.3 57.5,476.4 60.7,476.6 63.8,476.9 67.0,477.2 70.0,477.5 72.9,478.0 75.7,478.7 78.5,479.6 81.2,480.5 84.0,481.3 86.8,481.8 89.8,482.0 93.0,481.7 96.3,480.9 99.6,479.8 103.0,478.4 106.5,476.7 110.2,474.8 114.1,472.6 118.4,470.4 123.0,468.0 128.0,465.3 133.3,462.0 138.9,458.5 144.8,454.8 150.8,451.3 157.1,448.0 163.5,445.1 170.0,443.0 176.8,441.7 183.9,441.2 191.2,441.2 198.7,441.5 206.2,441.8 213.7,441.8 221.0,441.3 228.0,440.0 235.0,437.8 242.2,434.9 249.5,431.6 256.5,427.9 263.3,424.2 269.6,420.7 275.2,417.6 280.0,415.0 283.7,413.1 286.4,411.8 288.4,410.8 290.0,410.0 291.4,409.2 292.9,408.2 294.8,406.9 297.5,405.0 300.9,402.6 304.7,399.7 308.9,396.6 313.3,393.3 317.7,389.9 322.1,386.4 326.2,383.1 330.0,380.0 333.5,377.0 336.8,374.1 339.9,371.2 343.0,368.3 346.0,365.5 348.9,362.8 351.9,360.1 355.0,357.5 358.1,354.9 361.2,352.3 364.4,349.7 367.5,347.2 370.6,344.9 373.8,342.7 376.9,340.7 380.0,339.0 383.0,337.6 386.0,336.6 388.8,335.8 391.7,335.1 394.7,334.6 397.9,334.0 401.3,333.3 405.0,332.5 409.2,331.5 414.0,330.5 419.0,329.4 424.2,328.3 429.4,327.2 434.2,326.1 438.7,325.1 442.5,324.0 445.6,323.0 448.1,322.1 450.2,321.2 452.0,320.3 453.8,319.4 455.6,318.4 457.6,317.3 460.0,316.0 462.6,314.6 465.3,313.2 467.9,311.7 470.8,310.2 473.8,308.5 477.2,306.6 480.9,304.7 485.0,302.5 489.8,300.1 495.4,297.3 501.5,294.4 507.8,291.3 514.1,288.3 520.0,285.3 525.4,282.5 530.0,280.0 533.6,277.7 536.5,275.6 538.9,273.6 540.9,271.8 542.9,270.0 544.9,268.3 547.2,266.6 550.0,265.0 553.3,263.5 556.8,262.3 560.5,261.2 564.4,260.1 568.3,258.9 572.3,257.6 576.2,256.0 580.0,254.0 583.8,251.6 587.7,248.7 591.7,245.5 595.6,242.2 599.5,238.8 603.2,235.6 606.7,232.6 610.0,230.0 612.7,227.8 614.8,225.8 616.5,224.1 618.2,222.5 620.1,221.0 622.5,219.4 625.7,217.8 630.0,216.0 635.7,214.0 642.8,211.9 650.7,209.7 659.1,207.5 667.6,205.4 675.7,203.3 682.9,201.5 689.0,200.0 693.9,198.7 698.1,197.6 701.8,196.7 704.9,195.9 707.7,195.3 710.3,194.8 712.6,194.3 715.0,194.0 717.1,193.7 718.7,193.6 720.0,193.6 721.2,193.6 722.3,193.8 723.6,194.1 725.1,194.5 727.0,195.0 729.2,195.6 731.6,196.3 734.1,197.0 736.8,197.9 739.6,199.0 742.8,200.1 746.2,201.5 750.0,203.0 754.3,204.9 759.2,207.4 764.4,210.1 769.9,212.9 775.4,215.6 780.7,218.0 785.6,219.8 790.0,221.0 793.8,221.4 797.1,221.2 800.2,220.6 803.0,219.6 805.8,218.4 808.6,217.2 811.6,216.0 815.0,215.0 818.7,214.0 822.5,212.9 826.4,211.7 830.5,210.5 834.6,209.4 838.8,208.5 842.9,207.8 847.0,207.5 851.0,207.5 854.9,207.8 858.7,208.4 862.6,209.1 866.6,210.0 870.7,210.9 875.2,212.0 880.0,213.0 885.3,214.2 891.1,215.6 897.2,217.2 903.5,218.8 909.8,220.4 915.9,221.8 921.7,223.1 927.0,224.0 931.8,224.7 936.4,225.2 940.7,225.5 944.8,225.7 948.7,225.7 952.5,225.6 956.3,225.4 960.0,225.0 963.6,224.4 967.0,223.6 970.2,222.6 973.4,221.5 976.6,220.4 979.8,219.3 983.3,218.3 987.0,217.5 991.1,216.8 995.6,216.2 1000.4,215.6 1005.2,215.1 1009.9,214.7 1014.4,214.3 1018.5,214.0 1022.0,213.7 1025.0,213.5 1027.5,213.4 1029.7,213.3 1031.6,213.4 1033.3,213.4 1034.9,213.6 1036.4,213.8 1038.0,214.0 1039.4,214.3 1040.4,214.6 1041.2,214.9 1042.0,215.3 1042.9,215.8 1044.1,216.4 1045.7,217.1 1048.0,218.0 1051.0,219.1 1054.8,220.3 1059.0,221.7 1063.6,223.2 1068.1,224.7 1072.5,226.2 1076.6,227.7 1080.0,229.0 1082.7,230.2 1084.9,231.4 1086.8,232.5 1088.4,233.6 1090.1,234.7 1092.0,235.8 1094.2,236.9 1097.0,238.0 1100.4,239.0 1104.1,240.0 1108.2,240.9 1112.5,241.8 1116.9,242.8 1121.4,244.0 1125.8,245.3 1130.0,247.0 1134.1,249.0 1138.2,251.2 1142.2,253.7 1146.2,256.3 1150.3,259.0 1154.5,261.7 1158.7,264.4 1163.0,267.0 1167.6,269.6 1172.5,272.3 1177.5,275.0 1182.6,277.7 1187.5,280.4 1192.2,282.8 1196.4,285.1 1200.0,287.0 1202.8,288.6 1204.8,289.8 1206.2,290.8 1207.4,291.7 1208.7,292.5 1210.2,293.2 1212.5,294.1 1215.6,295.2 1219.8,296.5 1224.8,298.0 1230.3,299.6 1236.3,301.2 1242.3,302.8 1248.3,304.1 1253.9,305.2 1259.0,306.0 1263.5,306.4 1267.8,306.6 1271.7,306.5 1275.6,306.3 1279.4,305.9 1283.1,305.4 1287.0,304.7 1291.0,304.0 1295.2,303.1 1299.4,302.1 1303.6,300.9 1307.9,299.5 1312.2,298.2 1316.5,296.7 1320.8,295.3 1325.0,294.0 1329.2,292.6 1333.4,291.1 1337.6,289.6 1341.8,288.0 1345.9,286.6 1350.0,285.2 1354.0,284.1 1358.0,283.3 1361.9,282.7 1365.7,282.3 1369.5,282.1 1373.2,282.0 1376.9,282.1 1380.6,282.4 1384.3,282.8 1388.0,283.3 1391.6,284.1 1394.9,285.2 1398.1,286.5 1401.4,287.9 1404.8,289.4 1408.6,290.8 1412.8,292.1 1417.5,293.2 1423.2,294.1 1429.8,294.9 1437.1,295.6 1444.6,296.2 1451.9,296.8 1458.7,297.3 1464.5,297.8 1469.0,298.2 1471.7,298.6 1472.7,298.8 1472.7,299.0 1472.2,299.2 1471.7,299.3 1472.0,299.5 1473.6,299.7 1477.0,300.0 1482.8,300.4 1490.8,300.9 1500.1,301.5 1510.0,302.1 1519.9,302.7 1529.0,303.2 1536.6,303.7 1542.0,304.0" fill="none" stroke="#ff0000" stroke-width="1" />
<polyline points="22.0,491.0 86.5,523.0 606.0,142.0 782.0,265.0 822.0,177.5 1206.0,351.0 1310.0,248.0 1470.0,338.0" fill="none" stroke="#ff0000" stroke-width="1" />
<polyline points="22.0,540.0 606.0,142.0" fill="none" stroke="#ff0000" stroke-width="1" />
<polyline points="606.0,142.0 1206.0,351.0" fill="none" stroke="#ff0000" stroke-width="1" />
</g>
<text x="574.0" y="139" font-size="8.5" fill="#ffffff" font-weight="bold" textLength="64.00" lengthAdjust="spacingAndGlyphs">SELL LIQ : 4651.52</text>
<text x="751.5" y="263" font-size="8.5" fill="#ffffff" font-weight="bold" textLength="61.00" lengthAdjust="spacingAndGlyphs">BUY LIQ : 4628.91</text>
<text x="790.0" y="175" font-size="8.5" fill="#ffffff" font-weight="bold" textLength="64.00" lengthAdjust="spacingAndGlyphs">SELL LIQ : 4645.08</text>
<text x="1175.5" y="349" font-size="8.5" fill="#ffffff" font-weight="bold" textLength="61.00" lengthAdjust="spacingAndGlyphs">BUY LIQ : 4613.21</text>
<text x="1278.0" y="246" font-size="8.5" fill="#ffffff" font-weight="bold" textLength="64.00" lengthAdjust="spacingAndGlyphs">SELL LIQ : 4632.04</text>
<text x="1439.5" y="336" font-size="8.5" fill="#ffffff" font-weight="bold" textLength="61.00" lengthAdjust="spacingAndGlyphs">BUY LIQ : 4615.47</text>
<text x="55.5" y="521" font-size="8.5" fill="#ffffff" font-weight="bold" textLength="61.00" lengthAdjust="spacingAndGlyphs">BUY LIQ : 4581.68</text>
</g>
<rect x="1561" y="310" width="54" height="14" fill="#778899" />
<line x1="1559" y1="317.5" x2="1561" y2="317.5" stroke="#778899" stroke-width="1" />
<text x="1565" y="321" font-size="12.5" fill="#2b2b2b" letter-spacing="-0.031">4619.31</text>
<g clip-path="url(#cs)">
<line x1="23" y1="586.5" x2="1556" y2="586.5" stroke="#a0a0a0" stroke-width="1" stroke-dasharray="3 3"/>
<line x1="23" y1="597.5" x2="1556" y2="597.5" stroke="#a0a0a0" stroke-width="1" stroke-dasharray="3 3"/>
<line x1="23" y1="609.5" x2="1556" y2="609.5" stroke="#8a2be2" stroke-width="1" stroke-dasharray="3 3"/>
<line x1="23" y1="620.5" x2="1556" y2="620.5" stroke="#8a2be2" stroke-width="1" stroke-dasharray="3 3"/>
<line x1="23" y1="631.5" x2="1556" y2="631.5" stroke="#8a2be2" stroke-width="1" stroke-dasharray="3 3"/>
<line x1="23" y1="642.5" x2="1556" y2="642.5" stroke="#9acd32" stroke-width="1" stroke-dasharray="3 3"/>
<line x1="23" y1="664.5" x2="1556" y2="664.5" stroke="#1e90ff" stroke-width="1" stroke-dasharray="3 3"/>
<line x1="23" y1="686.5" x2="1556" y2="686.5" stroke="#d0d0d0" stroke-width="1" stroke-dasharray="3 3"/>
<line x1="23" y1="708.5" x2="1556" y2="708.5" stroke="#1e90ff" stroke-width="1" stroke-dasharray="3 3"/>
<line x1="23" y1="731.5" x2="1556" y2="731.5" stroke="#9acd32" stroke-width="1" stroke-dasharray="3 3"/>
<line x1="23" y1="742.5" x2="1556" y2="742.5" stroke="#8a2be2" stroke-width="1" stroke-dasharray="3 3"/>
<line x1="23" y1="753.5" x2="1556" y2="753.5" stroke="#8a2be2" stroke-width="1" stroke-dasharray="3 3"/>
<line x1="23" y1="764.5" x2="1556" y2="764.5" stroke="#8a2be2" stroke-width="1" stroke-dasharray="3 3"/>
<line x1="23" y1="775.5" x2="1556" y2="775.5" stroke="#a0a0a0" stroke-width="1" stroke-dasharray="3 3"/>
<line x1="23" y1="786.5" x2="1556" y2="786.5" stroke="#a0a0a0" stroke-width="1" stroke-dasharray="3 3"/>
<text x="25" y="591" font-size="12.5" fill="#6e6e6e" letter-spacing="0.018">DeepRSI(14) 43.03</text>
<text x="25" y="617" font-size="12.5" fill="#6e6e6e" letter-spacing="0.171">Down trend Momentum</text>
<text x="25" y="751" font-size="12.5" fill="#6e6e6e" letter-spacing="0.129">Up trend Momentum</text>
<polyline points="22.7,696.0 31.7,678.3 39.3,673.3 48.3,678.3 62.7,691.0 70.7,686.0 78.7,702.3 86.7,689.0 94.7,694.0 103.3,678.3 111.7,671.0 117.3,672.3 126.7,667.3 141.7,660.7 150.7,659.0 158.3,651.7 166.7,677.3 174.0,677.3 182.7,689.0 198.3,683.3 206.7,675.7 221.7,678.3 230.0,673.3 238.3,661.7 246.7,669.0 253.3,666.7 266.7,659.3 278.3,653.3 286.7,659.3 294.0,655.0 302.3,641.7 310.7,648.3 319.0,644.0 326.7,636.7 334.3,637.3 342.7,636.0 350.7,630.0 358.3,643.3 366.0,641.0 375.0,636.7 383.3,656.7 390.7,660.7 398.3,661.7 406.7,666.0 415.0,662.3 421.7,663.3 430.0,659.3 438.3,652.7 446.7,668.3 455.0,656.7 463.3,656.7 470.7,658.3 479.0,648.3 486.7,639.0 495.0,659.3 503.3,650.0 510.0,646.7 518.3,646.7 526.7,642.7 535.0,646.0 542.7,632.3 550.7,655.0 559.0,661.0 566.7,652.7 575.0,655.0 582.7,656.0 590.7,650.0 599.0,634.0 606.0,632.3 615.0,648.3 620.0,646.0 623.3,646.7 630.0,645.0 630.0,645.7 638.3,654.0 646.0,653.3 654.0,666.0 661.7,664.3 671.7,664.3 679.3,658.3 686.7,667.3 694.0,655.0 702.7,669.0 710.0,667.3 718.3,668.3 726.7,678.3 735.0,702.3 745.0,703.3 756.7,706.0 766.7,710.0 774.0,715.0 782.3,719.3 790.0,703.3 798.3,676.0 806.7,671.7 814.3,681.0 823.3,664.3 831.7,666.0 840.0,672.3 846.7,674.0 855.0,686.7 862.7,707.3 870.0,696.7 878.3,693.3 885.0,692.7 893.3,696.7 902.7,701.0 910.7,705.0 919.0,701.0 926.7,696.0 935.0,688.3 942.7,684.0 950.0,687.3 958.3,689.0 966.7,677.3 975.0,667.3 982.7,676.0 990.0,663.3 998.3,677.3 1006.7,680.0 1015.0,676.0 1023.3,679.3 1030.7,691.7 1038.3,681.7 1046.7,710.7 1054.3,714.3 1062.7,706.7 1070.7,714.3 1079.0,697.7 1086.7,711.0 1095.0,717.7 1103.3,705.7 1111.7,706.0 1120.0,706.0 1126.7,708.3 1135.0,704.3 1142.7,715.0 1151.0,719.0 1158.3,728.3 1166.7,721.7 1174.3,717.7 1183.3,722.3 1190.7,722.3 1198.3,733.3 1200.0,730.0 1206.0,714.4 1206.7,715.0 1214.4,725.2 1215.0,725.0 1222.9,714.4 1223.3,713.3 1230.1,707.2 1231.0,706.7 1238.5,702.4 1239.3,702.3 1246.7,710.0 1246.9,710.1 1254.2,703.6 1263.1,685.0 1269.8,688.4 1278.2,695.6 1286.2,683.1 1293.9,683.1 1302.3,666.3 1310.7,674.2 1317.9,673.5 1326.4,681.2 1334.3,676.6 1343.2,664.3 1350.4,665.1 1358.8,677.1 1366.1,681.9 1374.5,677.6 1382.9,692.3 1391.3,697.1 1397.4,695.2 1407.0,701.9 1414.2,705.3 1422.6,697.6 1431.0,692.3 1438.3,693.2 1446.7,695.2 1453.9,695.2 1462.3,689.6 1470.8,716.1 1478.0,702.4 1486.4,687.9 1494.8,685.5 1502.0,688.7 1510.5,695.2 1518.9,691.5 1526.1,692.3 1534.5,702.9 1541.8,701.4" fill="none" stroke="#1e90ff" stroke-width="1" shape-rendering="crispEdges"/>
</g>
<line x1="1559" y1="586.5" x2="1563" y2="586.5" stroke="#6a6a6a" stroke-width="1" />
<text x="1563" y="591" font-size="12.5" fill="#858585" letter-spacing="0.430">95.00</text>
<line x1="1559" y1="597.5" x2="1563" y2="597.5" stroke="#6a6a6a" stroke-width="1" />
<text x="1563" y="602" font-size="12.5" fill="#858585" letter-spacing="0.430">90.00</text>
<line x1="1559" y1="609.5" x2="1563" y2="609.5" stroke="#6a6a6a" stroke-width="1" />
<text x="1563" y="614" font-size="12.5" fill="#858585" letter-spacing="0.430">85.00</text>
<line x1="1559" y1="620.5" x2="1563" y2="620.5" stroke="#6a6a6a" stroke-width="1" />
<text x="1563" y="625" font-size="12.5" fill="#858585" letter-spacing="0.430">80.00</text>
<line x1="1559" y1="631.5" x2="1563" y2="631.5" stroke="#6a6a6a" stroke-width="1" />
<text x="1563" y="636" font-size="12.5" fill="#858585" letter-spacing="0.430">75.00</text>
<line x1="1559" y1="642.5" x2="1563" y2="642.5" stroke="#6a6a6a" stroke-width="1" />
<text x="1563" y="647" font-size="12.5" fill="#858585" letter-spacing="0.430">70.00</text>
<line x1="1559" y1="664.5" x2="1563" y2="664.5" stroke="#6a6a6a" stroke-width="1" />
<text x="1563" y="669" font-size="12.5" fill="#858585" letter-spacing="0.430">60.00</text>
<line x1="1559" y1="686.5" x2="1563" y2="686.5" stroke="#6a6a6a" stroke-width="1" />
<text x="1563" y="691" font-size="12.5" fill="#858585" letter-spacing="0.430">50.00</text>
<line x1="1559" y1="708.5" x2="1563" y2="708.5" stroke="#6a6a6a" stroke-width="1" />
<text x="1563" y="713" font-size="12.5" fill="#858585" letter-spacing="0.430">40.00</text>
<line x1="1559" y1="731.5" x2="1563" y2="731.5" stroke="#6a6a6a" stroke-width="1" />
<text x="1563" y="736" font-size="12.5" fill="#858585" letter-spacing="0.430">30.00</text>
<line x1="1559" y1="742.5" x2="1563" y2="742.5" stroke="#6a6a6a" stroke-width="1" />
<text x="1563" y="747" font-size="12.5" fill="#858585" letter-spacing="0.430">25.00</text>
<line x1="1559" y1="753.5" x2="1563" y2="753.5" stroke="#6a6a6a" stroke-width="1" />
<text x="1563" y="758" font-size="12.5" fill="#858585" letter-spacing="0.430">20.00</text>
<line x1="1559" y1="764.5" x2="1563" y2="764.5" stroke="#6a6a6a" stroke-width="1" />
<text x="1563" y="769" font-size="12.5" fill="#858585" letter-spacing="0.430">15.00</text>
<line x1="1559" y1="775.5" x2="1563" y2="775.5" stroke="#6a6a6a" stroke-width="1" />
<text x="1563" y="780" font-size="12.5" fill="#858585" letter-spacing="0.430">10.00</text>
<line x1="1559" y1="786.5" x2="1563" y2="786.5" stroke="#6a6a6a" stroke-width="1" />
<text x="1563" y="791" font-size="12.5" fill="#858585" letter-spacing="2.890">5.00</text>
<text x="1563" y="587" font-size="12.5" fill="#7a7a7a" letter-spacing="0.153">100.00</text>
<text x="1563" y="794" font-size="12.5" fill="#7a7a7a" letter-spacing="0.557">0.00</text>
<line x1="1559" y1="576.5" x2="1563" y2="576.5" stroke="#6a6a6a" stroke-width="1" />
<line x1="22.5" y1="796" x2="22.5" y2="800" stroke="#6a6a6a" stroke-width="1" />
<text x="22" y="813" font-size="12.5" fill="#858585" letter-spacing="0.059">2 Apr 2026</text>
<line x1="150.5" y1="796" x2="150.5" y2="800" stroke="#6a6a6a" stroke-width="1" />
<text x="150" y="813" font-size="12.5" fill="#858585" letter-spacing="-0.194">2 Apr 06:52</text>
<line x1="278.5" y1="796" x2="278.5" y2="800" stroke="#6a6a6a" stroke-width="1" />
<text x="278" y="813" font-size="12.5" fill="#858585" letter-spacing="-0.194">2 Apr 07:08</text>
<line x1="406.5" y1="796" x2="406.5" y2="800" stroke="#6a6a6a" stroke-width="1" />
<text x="406" y="813" font-size="12.5" fill="#858585" letter-spacing="-0.194">2 Apr 07:24</text>
<line x1="534.5" y1="796" x2="534.5" y2="800" stroke="#6a6a6a" stroke-width="1" />
<text x="534" y="813" font-size="12.5" fill="#858585" letter-spacing="-0.194">2 Apr 07:40</text>
<line x1="662.5" y1="796" x2="662.5" y2="800" stroke="#6a6a6a" stroke-width="1" />
<text x="662" y="813" font-size="12.5" fill="#858585" letter-spacing="-0.194">2 Apr 07:56</text>
<line x1="790.5" y1="796" x2="790.5" y2="800" stroke="#6a6a6a" stroke-width="1" />
<text x="790" y="813" font-size="12.5" fill="#858585" letter-spacing="-0.194">2 Apr 08:12</text>
<line x1="918.5" y1="796" x2="918.5" y2="800" stroke="#6a6a6a" stroke-width="1" />
<text x="918" y="813" font-size="12.5" fill="#858585" letter-spacing="-0.194">2 Apr 08:28</text>
<line x1="1046.5" y1="796" x2="1046.5" y2="800" stroke="#6a6a6a" stroke-width="1" />
<text x="1046" y="813" font-size="12.5" fill="#858585" letter-spacing="-0.194">2 Apr 08:44</text>
<line x1="1174.5" y1="796" x2="1174.5" y2="800" stroke="#6a6a6a" stroke-width="1" />
<text x="1174" y="813" font-size="12.5" fill="#858585" letter-spacing="-0.194">2 Apr 09:00</text>
<line x1="1302.5" y1="796" x2="1302.5" y2="800" stroke="#6a6a6a" stroke-width="1" />
<text x="1302" y="813" font-size="12.5" fill="#858585" letter-spacing="-0.194">2 Apr 09:16</text>
<line x1="1430.5" y1="796" x2="1430.5" y2="800" stroke="#6a6a6a" stroke-width="1" />
<text x="1430" y="813" font-size="12.5" fill="#858585" letter-spacing="-0.194">2 Apr 09:32</text>
<rect x="1629" y="128" width="170" height="20" fill="#3a3a3a" />
<text x="1634" y="143" font-size="12" fill="#5e5e5e" textLength="35.00" lengthAdjust="spacingAndGlyphs">Symbol</text>
<text x="1793" y="143" font-size="12" fill="#5e5e5e" text-anchor="end">Values</text>
<defs><clipPath id="ct"><rect x="1629" y="148" width="171" height="670"/></clipPath></defs><g clip-path="url(#ct)">
<rect x="1629" y="148" width="170" height="20" fill="#353535" />
<line x1="1629" y1="167.5" x2="1799" y2="167.5" stroke="#3e3e3e" stroke-width="1" />
<line x1="1724.5" y1="148" x2="1724.5" y2="168" stroke="#3e3e3e" stroke-width="1" />
<text x="1659" y="163" font-size="11.5" fill="#f0f0f0" textLength="43.50" lengthAdjust="spacingAndGlyphs">XAGUSD</text>
<text x="1793" y="163" font-size="11.5" fill="#f0f0f0" text-anchor="end">32.95</text>
<rect x="1629" y="168" width="95" height="20" fill="#ffff00" />
<rect x="1725" y="168" width="74" height="20" fill="#ffff00" />
<text x="1659" y="183" font-size="11.5" fill="#8a8a5a" textLength="43.50" lengthAdjust="spacingAndGlyphs">XAUUSD</text>
<text x="1793" y="183" font-size="11.5" fill="#8a8a5a" text-anchor="end">52.93</text>
<rect x="1629" y="188" width="170" height="20" fill="#353535" />
<line x1="1629" y1="207.5" x2="1799" y2="207.5" stroke="#3e3e3e" stroke-width="1" />
<line x1="1724.5" y1="188" x2="1724.5" y2="208" stroke="#3e3e3e" stroke-width="1" />
<text x="1659" y="203" font-size="11.5" fill="#f0f0f0" textLength="43.50" lengthAdjust="spacingAndGlyphs">XPDUSD</text>
<text x="1793" y="203" font-size="11.5" fill="#f0f0f0" text-anchor="end">31.55</text>
<rect x="1629" y="208" width="170" height="20" fill="#3a3a3a" />
<line x1="1629" y1="227.5" x2="1799" y2="227.5" stroke="#3e3e3e" stroke-width="1" />
<line x1="1724.5" y1="208" x2="1724.5" y2="228" stroke="#3e3e3e" stroke-width="1" />
<text x="1659" y="223" font-size="11.5" fill="#3d9df5" letter-spacing="-0.630">XPTUSD</text>
<text x="1793" y="223" font-size="11.5" fill="#3d9df5" text-anchor="end">15.22</text>
<rect x="1629" y="228" width="170" height="20" fill="#353535" />
<line x1="1629" y1="247.5" x2="1799" y2="247.5" stroke="#3e3e3e" stroke-width="1" />
<line x1="1724.5" y1="228" x2="1724.5" y2="248" stroke="#3e3e3e" stroke-width="1" />
<text x="1659" y="243" font-size="11.5" fill="#f0f0f0" textLength="43.50" lengthAdjust="spacingAndGlyphs">XAUEUR</text>
<text x="1793" y="243" font-size="11.5" fill="#f0f0f0" text-anchor="end">65.41</text>
<rect x="1629" y="248" width="170" height="20" fill="#3a3a3a" />
<line x1="1629" y1="267.5" x2="1799" y2="267.5" stroke="#3e3e3e" stroke-width="1" />
<line x1="1724.5" y1="248" x2="1724.5" y2="268" stroke="#3e3e3e" stroke-width="1" />
<text x="1659" y="263" font-size="11.5" fill="#f0f0f0" textLength="43.50" lengthAdjust="spacingAndGlyphs">XAGEUR</text>
<text x="1793" y="263" font-size="11.5" fill="#f0f0f0" text-anchor="end">40.76</text>
<rect x="1629" y="268" width="170" height="20" fill="#353535" />
<line x1="1629" y1="287.5" x2="1799" y2="287.5" stroke="#3e3e3e" stroke-width="1" />
<line x1="1724.5" y1="268" x2="1724.5" y2="288" stroke="#3e3e3e" stroke-width="1" />
<text x="1659" y="283" font-size="11.5" fill="#f0f0f0" textLength="43.50" lengthAdjust="spacingAndGlyphs">AUDCAD</text>
<text x="1793" y="283" font-size="11.5" fill="#f0f0f0" text-anchor="end">49.35</text>
<rect x="1629" y="288" width="170" height="20" fill="#3a3a3a" />
<line x1="1629" y1="307.5" x2="1799" y2="307.5" stroke="#3e3e3e" stroke-width="1" />
<line x1="1724.5" y1="288" x2="1724.5" y2="308" stroke="#3e3e3e" stroke-width="1" />
<text x="1659" y="303" font-size="11.5" fill="#e01010" textLength="43.50" lengthAdjust="spacingAndGlyphs">AUDCHF</text>
<text x="1793" y="303" font-size="11.5" fill="#e01010" text-anchor="end">83.60</text>
<rect x="1629" y="308" width="170" height="20" fill="#353535" />
<line x1="1629" y1="327.5" x2="1799" y2="327.5" stroke="#3e3e3e" stroke-width="1" />
<line x1="1724.5" y1="308" x2="1724.5" y2="328" stroke="#3e3e3e" stroke-width="1" />
<text x="1659" y="323" font-size="11.5" fill="#f0f0f0" letter-spacing="-0.375">AUDJPY</text>
<text x="1793" y="323" font-size="11.5" fill="#f0f0f0" text-anchor="end">38.29</text>
<rect x="1629" y="328" width="170" height="20" fill="#3a3a3a" />
<line x1="1629" y1="347.5" x2="1799" y2="347.5" stroke="#3e3e3e" stroke-width="1" />
<line x1="1724.5" y1="328" x2="1724.5" y2="348" stroke="#3e3e3e" stroke-width="1" />
<text x="1659" y="343" font-size="11.5" fill="#3d9df5" textLength="43.50" lengthAdjust="spacingAndGlyphs">AUDNZD</text>
<text x="1793" y="343" font-size="11.5" fill="#3d9df5" text-anchor="end">13.04</text>
<rect x="1629" y="348" width="170" height="20" fill="#353535" />
<line x1="1629" y1="367.5" x2="1799" y2="367.5" stroke="#3e3e3e" stroke-width="1" />
<line x1="1724.5" y1="348" x2="1724.5" y2="368" stroke="#3e3e3e" stroke-width="1" />
<text x="1659" y="363" font-size="11.5" fill="#f0f0f0" textLength="43.50" lengthAdjust="spacingAndGlyphs">AUDUSD</text>
<text x="1793" y="363" font-size="11.5" fill="#f0f0f0" text-anchor="end">36.32</text>
<rect x="1629" y="368" width="170" height="20" fill="#3a3a3a" />
<line x1="1629" y1="387.5" x2="1799" y2="387.5" stroke="#3e3e3e" stroke-width="1" />
<line x1="1724.5" y1="368" x2="1724.5" y2="388" stroke="#3e3e3e" stroke-width="1" />
<text x="1659" y="383" font-size="11.5" fill="#3d9df5" textLength="43.50" lengthAdjust="spacingAndGlyphs">EURAUD</text>
<text x="1793" y="383" font-size="11.5" fill="#3d9df5" text-anchor="end">11.40</text>
<rect x="1629" y="388" width="170" height="20" fill="#353535" />
<line x1="1629" y1="407.5" x2="1799" y2="407.5" stroke="#3e3e3e" stroke-width="1" />
<line x1="1724.5" y1="388" x2="1724.5" y2="408" stroke="#3e3e3e" stroke-width="1" />
<text x="1659" y="403" font-size="11.5" fill="#f0f0f0" textLength="43.50" lengthAdjust="spacingAndGlyphs">EURCAD</text>
<text x="1793" y="403" font-size="11.5" fill="#f0f0f0" text-anchor="end">25.67</text>
<rect x="1629" y="408" width="170" height="20" fill="#3a3a3a" />
<line x1="1629" y1="427.5" x2="1799" y2="427.5" stroke="#3e3e3e" stroke-width="1" />
<line x1="1724.5" y1="408" x2="1724.5" y2="428" stroke="#3e3e3e" stroke-width="1" />
<text x="1659" y="423" font-size="11.5" fill="#f0f0f0" textLength="43.50" lengthAdjust="spacingAndGlyphs">EURCHF</text>
<text x="1793" y="423" font-size="11.5" fill="#f0f0f0" text-anchor="end">65.56</text>
<rect x="1629" y="428" width="170" height="20" fill="#353535" />
<line x1="1629" y1="447.5" x2="1799" y2="447.5" stroke="#3e3e3e" stroke-width="1" />
<line x1="1724.5" y1="428" x2="1724.5" y2="448" stroke="#3e3e3e" stroke-width="1" />
<text x="1659" y="443" font-size="11.5" fill="#f0f0f0" textLength="43.50" lengthAdjust="spacingAndGlyphs">EURGBP</text>
<text x="1793" y="443" font-size="11.5" fill="#f0f0f0" text-anchor="end">72.75</text>
<rect x="1629" y="448" width="170" height="20" fill="#3a3a3a" />
<line x1="1629" y1="467.5" x2="1799" y2="467.5" stroke="#3e3e3e" stroke-width="1" />
<line x1="1724.5" y1="448" x2="1724.5" y2="468" stroke="#3e3e3e" stroke-width="1" />
<text x="1659" y="463" font-size="11.5" fill="#3d9df5" letter-spacing="-0.375">EURJPY</text>
<text x="1793" y="463" font-size="11.5" fill="#3d9df5" text-anchor="end">10.50</text>
<rect x="1629" y="468" width="170" height="20" fill="#353535" />
<line x1="1629" y1="487.5" x2="1799" y2="487.5" stroke="#3e3e3e" stroke-width="1" />
<line x1="1724.5" y1="468" x2="1724.5" y2="488" stroke="#3e3e3e" stroke-width="1" />
<text x="1659" y="483" font-size="11.5" fill="#3d9df5" textLength="43.50" lengthAdjust="spacingAndGlyphs">EURNZD</text>
<text x="1793" y="483" font-size="11.5" fill="#3d9df5" text-anchor="end">7.53</text>
<rect x="1629" y="488" width="170" height="20" fill="#3a3a3a" />
<line x1="1629" y1="507.5" x2="1799" y2="507.5" stroke="#3e3e3e" stroke-width="1" />
<line x1="1724.5" y1="488" x2="1724.5" y2="508" stroke="#3e3e3e" stroke-width="1" />
<text x="1659" y="503" font-size="11.5" fill="#3d9df5" textLength="43.50" lengthAdjust="spacingAndGlyphs">EURUSD</text>
<text x="1793" y="503" font-size="11.5" fill="#3d9df5" text-anchor="end">19.82</text>
<rect x="1629" y="508" width="170" height="20" fill="#353535" />
<line x1="1629" y1="527.5" x2="1799" y2="527.5" stroke="#3e3e3e" stroke-width="1" />
<line x1="1724.5" y1="508" x2="1724.5" y2="528" stroke="#3e3e3e" stroke-width="1" />
<text x="1659" y="523" font-size="11.5" fill="#f0f0f0" textLength="43.50" lengthAdjust="spacingAndGlyphs">GBPCHF</text>
<text x="1793" y="523" font-size="11.5" fill="#f0f0f0" text-anchor="end">47.19</text>
<rect x="1629" y="528" width="170" height="20" fill="#3a3a3a" />
<line x1="1629" y1="547.5" x2="1799" y2="547.5" stroke="#3e3e3e" stroke-width="1" />
<line x1="1724.5" y1="528" x2="1724.5" y2="548" stroke="#3e3e3e" stroke-width="1" />
<text x="1659" y="543" font-size="11.5" fill="#3d9df5" letter-spacing="-0.376">GBPJPY</text>
<text x="1793" y="543" font-size="11.5" fill="#3d9df5" text-anchor="end">14.35</text>
<rect x="1629" y="548" width="170" height="20" fill="#353535" />
<line x1="1629" y1="567.5" x2="1799" y2="567.5" stroke="#3e3e3e" stroke-width="1" />
<line x1="1724.5" y1="548" x2="1724.5" y2="568" stroke="#3e3e3e" stroke-width="1" />
<text x="1659" y="563" font-size="11.5" fill="#f0f0f0" textLength="43.50" lengthAdjust="spacingAndGlyphs">GBPUSD</text>
<text x="1793" y="563" font-size="11.5" fill="#f0f0f0" text-anchor="end">20.31</text>
<rect x="1629" y="568" width="170" height="20" fill="#3a3a3a" />
<line x1="1629" y1="587.5" x2="1799" y2="587.5" stroke="#3e3e3e" stroke-width="1" />
<line x1="1724.5" y1="568" x2="1724.5" y2="588" stroke="#3e3e3e" stroke-width="1" />
<text x="1659" y="583" font-size="11.5" fill="#f0f0f0" textLength="43.50" lengthAdjust="spacingAndGlyphs">NZDUSD</text>
<text x="1793" y="583" font-size="11.5" fill="#f0f0f0" text-anchor="end">66.15</text>
<rect x="1629" y="588" width="170" height="20" fill="#353535" />
<line x1="1629" y1="607.5" x2="1799" y2="607.5" stroke="#3e3e3e" stroke-width="1" />
<line x1="1724.5" y1="588" x2="1724.5" y2="608" stroke="#3e3e3e" stroke-width="1" />
<text x="1659" y="603" font-size="11.5" fill="#f0f0f0" textLength="43.50" lengthAdjust="spacingAndGlyphs">USDCAD</text>
<text x="1793" y="603" font-size="11.5" fill="#f0f0f0" text-anchor="end">77.69</text>
<rect x="1629" y="608" width="170" height="20" fill="#3a3a3a" />
<line x1="1629" y1="627.5" x2="1799" y2="627.5" stroke="#3e3e3e" stroke-width="1" />
<line x1="1724.5" y1="608" x2="1724.5" y2="628" stroke="#3e3e3e" stroke-width="1" />
<text x="1659" y="623" font-size="11.5" fill="#e01010" textLength="43.50" lengthAdjust="spacingAndGlyphs">USDCHF</text>
<text x="1793" y="623" font-size="11.5" fill="#e01010" text-anchor="end">87.14</text>
<rect x="1629" y="628" width="170" height="20" fill="#353535" />
<line x1="1629" y1="647.5" x2="1799" y2="647.5" stroke="#3e3e3e" stroke-width="1" />
<line x1="1724.5" y1="628" x2="1724.5" y2="648" stroke="#3e3e3e" stroke-width="1" />
<text x="1659" y="643" font-size="11.5" fill="#f0f0f0" letter-spacing="-0.375">USDJPY</text>
<text x="1793" y="643" font-size="11.5" fill="#f0f0f0" text-anchor="end">70.22</text>
<rect x="1629" y="648" width="170" height="20" fill="#3a3a3a" />
<line x1="1629" y1="667.5" x2="1799" y2="667.5" stroke="#3e3e3e" stroke-width="1" />
<line x1="1724.5" y1="648" x2="1724.5" y2="668" stroke="#3e3e3e" stroke-width="1" />
<text x="1659" y="663" font-size="11.5" fill="#e01010" textLength="43.50" lengthAdjust="spacingAndGlyphs">CADCHF</text>
<text x="1793" y="663" font-size="11.5" fill="#e01010" text-anchor="end">82.23</text>
<rect x="1629" y="668" width="170" height="20" fill="#353535" />
<line x1="1629" y1="687.5" x2="1799" y2="687.5" stroke="#3e3e3e" stroke-width="1" />
<line x1="1724.5" y1="668" x2="1724.5" y2="688" stroke="#3e3e3e" stroke-width="1" />
<text x="1659" y="683" font-size="11.5" fill="#f0f0f0" letter-spacing="-0.375">CADJPY</text>
<text x="1793" y="683" font-size="11.5" fill="#f0f0f0" text-anchor="end">62.63</text>
<rect x="1629" y="688" width="170" height="20" fill="#3a3a3a" />
<line x1="1629" y1="707.5" x2="1799" y2="707.5" stroke="#3e3e3e" stroke-width="1" />
<line x1="1724.5" y1="688" x2="1724.5" y2="708" stroke="#3e3e3e" stroke-width="1" />
<text x="1659" y="703" font-size="11.5" fill="#3d9df5" textLength="43.50" lengthAdjust="spacingAndGlyphs">GBPAUD</text>
<text x="1793" y="703" font-size="11.5" fill="#3d9df5" text-anchor="end">18.75</text>
<rect x="1629" y="708" width="170" height="20" fill="#353535" />
<line x1="1629" y1="727.5" x2="1799" y2="727.5" stroke="#3e3e3e" stroke-width="1" />
<line x1="1724.5" y1="708" x2="1724.5" y2="728" stroke="#3e3e3e" stroke-width="1" />
<text x="1659" y="723" font-size="11.5" fill="#f0f0f0" textLength="43.50" lengthAdjust="spacingAndGlyphs">GBPCAD</text>
<text x="1793" y="723" font-size="11.5" fill="#f0f0f0" text-anchor="end">22.75</text>
<rect x="1629" y="728" width="170" height="20" fill="#3a3a3a" />
<line x1="1629" y1="747.5" x2="1799" y2="747.5" stroke="#3e3e3e" stroke-width="1" />
<line x1="1724.5" y1="728" x2="1724.5" y2="748" stroke="#3e3e3e" stroke-width="1" />
<text x="1659" y="743" font-size="11.5" fill="#3d9df5" textLength="43.50" lengthAdjust="spacingAndGlyphs">GBPNZD</text>
<text x="1793" y="743" font-size="11.5" fill="#3d9df5" text-anchor="end">17.12</text>
<rect x="1629" y="748" width="170" height="20" fill="#353535" />
<line x1="1629" y1="767.5" x2="1799" y2="767.5" stroke="#3e3e3e" stroke-width="1" />
<line x1="1724.5" y1="748" x2="1724.5" y2="768" stroke="#3e3e3e" stroke-width="1" />
<text x="1659" y="763" font-size="11.5" fill="#f0f0f0" textLength="43.50" lengthAdjust="spacingAndGlyphs">EURNOK</text>
<text x="1793" y="763" font-size="11.5" fill="#f0f0f0" text-anchor="end">50.49</text>
<rect x="1629" y="768" width="170" height="20" fill="#3a3a3a" />
<line x1="1629" y1="787.5" x2="1799" y2="787.5" stroke="#3e3e3e" stroke-width="1" />
<line x1="1724.5" y1="768" x2="1724.5" y2="788" stroke="#3e3e3e" stroke-width="1" />
<text x="1659" y="783" font-size="11.5" fill="#3d9df5" letter-spacing="-0.631">EURPLN</text>
<text x="1793" y="783" font-size="11.5" fill="#3d9df5" text-anchor="end">6.43</text>
<rect x="1629" y="788" width="170" height="20" fill="#353535" />
<line x1="1629" y1="807.5" x2="1799" y2="807.5" stroke="#3e3e3e" stroke-width="1" />
<line x1="1724.5" y1="788" x2="1724.5" y2="808" stroke="#3e3e3e" stroke-width="1" />
<text x="1659" y="803" font-size="11.5" fill="#f0f0f0" textLength="43.50" lengthAdjust="spacingAndGlyphs">EURSEK</text>
<text x="1793" y="803" font-size="11.5" fill="#f0f0f0" text-anchor="end">63.78</text>
<rect x="1629" y="808" width="170" height="20" fill="#3a3a3a" />
<line x1="1629" y1="827.5" x2="1799" y2="827.5" stroke="#3e3e3e" stroke-width="1" />
<line x1="1724.5" y1="808" x2="1724.5" y2="828" stroke="#3e3e3e" stroke-width="1" />
<text x="1659" y="823" font-size="11.5" fill="#f0f0f0" textLength="43.50" lengthAdjust="spacingAndGlyphs">GBPNOK</text>
<text x="1793" y="823" font-size="11.5" fill="#f0f0f0" text-anchor="end">30.77</text>
</g>
<line x1="1724.5" y1="128" x2="1724.5" y2="148" stroke="#444" stroke-width="1" />
<rect x="1806" y="128" width="16" height="16" fill="#3a3a3a" />
<path d="M1810 139l4-4 4 4" fill="none" stroke="#1a1a1a" stroke-width="1.6"/>
<rect x="1806" y="400" width="16" height="418" fill="#393939" />
<path d="M1810 808l4 4 4-4" fill="none" stroke="#1a1a1a" stroke-width="1.6"/>
<rect x="18" y="836" width="11" height="11" fill="#ffffff" />
<path d="M20 841.5l2.8 3l4.5-6" fill="none" stroke="#333" stroke-width="1.3"/>
<text x="37" y="847" font-size="12.5" fill="#e8e8e8" font-weight="bold" textLength="78.00" lengthAdjust="spacingAndGlyphs">Symbols filter:</text>
<rect x="117" y="831" width="785" height="20" fill="#393939" />
<text x="124" y="846" font-size="12.5" fill="#5a5a5a" letter-spacing="-0.488">Forex</text>
<path d="M805 839l4 4 4-4" fill="none" stroke="#1e1e1e" stroke-width="1.2"/>
<text x="839" y="847" font-size="12.5" fill="#666" letter-spacing="-0.593">Request</text>
<rect x="900.5" y="831.5" width="129" height="19" fill="#d4d4d4" stroke="#b8b8b8" />
<text x="924" y="847" font-size="12.5" fill="#707070" letter-spacing="-0.123">Get Calendar</text>
<rect x="1060" y="837" width="11" height="11" fill="#ffffff" />
<text x="1078" y="848" font-size="12.5" fill="#5e5e5e" letter-spacing="-0.303">Selected Calendar</text>
<rect x="1200" y="837" width="11" height="11" fill="#ffffff" />
<text x="1218" y="848" font-size="12.5" fill="#5e5e5e" letter-spacing="-0.167">Activate Calendar</text>
<rect x="1341" y="837" width="11" height="11" fill="#ffffff" />
<text x="1358" y="848" font-size="12.5" fill="#5e5e5e" letter-spacing="-0.360">Set Calendar</text>
<text x="1460" y="847" font-size="12.5" fill="#5e5e5e" letter-spacing="-0.367">Type</text>
<rect x="1510" y="831" width="80" height="20" fill="#393939" />
<text x="1517" y="847" font-size="12.5" fill="#5a5a5a" textLength="26.00" lengthAdjust="spacingAndGlyphs">Base</text>
<path d="M1575 839l4 4 4-4" fill="none" stroke="#1e1e1e" stroke-width="1.2"/>
<rect x="1610" y="837" width="11" height="11" fill="#ffffff" />
<text x="1628" y="848" font-size="12.5" fill="#5e5e5e" letter-spacing="0.094">Calendar Multiselection</text>
<text x="30" y="887" font-size="12" fill="#5e5e5e" textLength="15.00" lengthAdjust="spacingAndGlyphs">TF:</text>
<rect x="90" y="871" width="60" height="20" fill="#393939" />
<text x="97" y="887" font-size="12.5" fill="#5a5a5a" letter-spacing="-0.365">M1</text>
<path d="M136 879l4 4 4-4" fill="none" stroke="#222" stroke-width="1.2"/>
<rect x="90" y="901" width="60" height="60" fill="#393939" />
<text x="30" y="917" font-size="12.5" fill="#5e5e5e" textLength="22.00" lengthAdjust="spacingAndGlyphs">Lot :</text>
<text x="96" y="917" font-size="12.5" fill="#b8b8b8">0.01</text>
<path d="M138 910l3.5-4l3.5 4z M138 916l3.5 4l3.5-4z" fill="#111"/>
<text x="30" y="937" font-size="12.5" fill="#5e5e5e" textLength="42.00" lengthAdjust="spacingAndGlyphs">Risk(%) :</text>
<text x="96" y="937" font-size="12.5" fill="#b8b8b8">700</text>
<path d="M138 930l3.5-4l3.5 4z M138 936l3.5 4l3.5-4z" fill="#111"/>
<text x="30" y="957" font-size="12.5" fill="#5e5e5e" letter-spacing="-0.256">Profit(%) :</text>
<text x="96" y="957" font-size="12.5" fill="#b8b8b8">1000</text>
<path d="M138 950l3.5-4l3.5 4z M138 956l3.5 4l3.5-4z" fill="#111"/>
<text x="190" y="883" font-size="12.5" fill="#5e5e5e" letter-spacing="-0.285">Buy Order Number :</text>
<rect x="191" y="896" width="11" height="11" fill="#ffffff" />
<path d="M193 901.5l2.8 3l4.5-6" fill="none" stroke="#333" stroke-width="1.3"/>
<rect x="220" y="891" width="80" height="20" fill="#393939" />
<text x="227" y="907" font-size="12.5" fill="#7a7a7a">1</text>
<path d="M288 898l3.5-4l3.5 4z M288 904l3.5 4l3.5-4z" fill="#111"/>
<text x="190" y="933" font-size="12.5" fill="#5e5e5e" letter-spacing="-0.175">Sell Order Number :</text>
<rect x="191" y="946" width="11" height="11" fill="#ffffff" />
<path d="M193 951.5l2.8 3l4.5-6" fill="none" stroke="#333" stroke-width="1.3"/>
<rect x="220" y="941" width="80" height="20" fill="#393939" />
<text x="227" y="957" font-size="12.5" fill="#7a7a7a">3</text>
<path d="M288 948l3.5-4l3.5 4z M288 954l3.5 4l3.5-4z" fill="#111"/>
<rect x="341" y="877" width="11" height="11" fill="#ffffff" />
<text x="358" y="888" font-size="12.5" fill="#5e5e5e" letter-spacing="-0.371">Buy Order</text>
<rect x="341" y="892" width="11" height="11" fill="#ffffff" />
<path d="M343 897.5l2.8 3l4.5-6" fill="none" stroke="#333" stroke-width="1.3"/>
<text x="358" y="903" font-size="12.5" fill="#3d9df5" letter-spacing="-0.252">Sell Order</text>
<rect x="341" y="907" width="11" height="11" fill="#ffffff" />
<text x="358" y="918" font-size="12.5" fill="#5e5e5e" letter-spacing="-0.190">Buy limit Order</text>
<rect x="341" y="922" width="11" height="11" fill="#ffffff" />
<text x="358" y="933" font-size="12.5" fill="#5e5e5e" letter-spacing="0.003">Sell limit Order</text>
<rect x="341" y="937" width="11" height="11" fill="#ffffff" />
<text x="358" y="948" font-size="12.5" fill="#5e5e5e" letter-spacing="-0.236">Buy stop Order</text>
<rect x="341" y="952" width="11" height="11" fill="#ffffff" />
<text x="358" y="963" font-size="12.5" fill="#5e5e5e" letter-spacing="-0.098">Sell stop Order</text>
<text x="490" y="892" font-size="12.5" fill="#555" letter-spacing="-0.437">Chart sca</text>
<rect x="585" y="876" width="35" height="20" fill="#393939" />
<text x="591" y="892" font-size="12.5" fill="#7a7a7a">3</text>
<path d="M612 883l3.5-4l3.5 4z M612 889l3.5 4l3.5-4z" fill="#111"/>
<rect x="625.5" y="876.5" width="93" height="19" fill="#ffffff" stroke="#8aa4c0" />
<text x="631" y="892" font-size="12.5" fill="#000" letter-spacing="-0.174">2026.04.02</text>
<rect x="693" y="877" width="25" height="18" fill="#e8eef6" />
<rect x="695.5" y="880.5" width="10" height="10" fill="#fff" stroke="#888"/><path d="M697 884h7M697 887h7M700 881v9" stroke="#aaa" stroke-width="0.8"/><path d="M709 884h7l-3.5 3.5z" fill="#3a6ea5"/>
<rect x="491" y="906" width="11" height="11" fill="#ffffff" />
<text x="508" y="917" font-size="12.5" fill="#5e5e5e" letter-spacing="-0.020">Entry :</text>
<rect x="491" y="926" width="11" height="11" fill="#ffffff" />
<text x="508" y="937" font-size="12.5" fill="#5e5e5e" textLength="57.00" lengthAdjust="spacingAndGlyphs">Stop Loss :</text>
<rect x="491" y="946" width="11" height="11" fill="#ffffff" />
<text x="508" y="957" font-size="12.5" fill="#5e5e5e" letter-spacing="-0.083">Take Profit :</text>
<rect x="585" y="901" width="135" height="60" fill="#393939" />
<circle cx="838.5" cy="929.5" r="55" fill="#393939"/>
<circle cx="838.5" cy="929.5" r="40.5" fill="#363636"/>
<path d="M839.08 874.50A55 55 0 0 1 870.36 884.67L864.57 892.82A45 45 0 0 0 838.97 884.50Z M871.29 885.35A55 55 0 0 1 890.63 911.96L881.15 915.15A45 45 0 0 0 865.33 893.37Z M890.98 913.05A55 55 0 0 1 890.98 945.95L881.44 942.96A45 45 0 0 0 881.44 916.04Z M890.63 947.04A55 55 0 0 1 871.29 973.65L865.33 965.63A45 45 0 0 0 881.15 943.85Z M870.36 974.33A55 55 0 0 1 839.08 984.50L838.97 974.50A45 45 0 0 0 864.57 966.18Z M837.92 984.50A55 55 0 0 1 806.64 974.33L812.43 966.18A45 45 0 0 0 838.03 974.50Z M805.71 973.65A55 55 0 0 1 786.37 947.04L795.85 943.85A45 45 0 0 0 811.67 965.63Z M786.02 945.95A55 55 0 0 1 785.90 913.42L795.47 916.34A45 45 0 0 0 795.56 942.96Z" fill="#c4c4c4"/>
<text x="838.5" y="935" font-size="17" fill="#ececec" text-anchor="middle">22.77</text>
<text x="838.5" y="953" font-size="10.5" fill="#168484" text-anchor="middle">UP</text>
<circle cx="968.5" cy="929.5" r="55" fill="#393939"/>
<circle cx="968.5" cy="929.5" r="40.5" fill="#363636"/>
<path d="M969.08 874.50A55 55 0 0 1 1000.36 884.67L994.57 892.82A45 45 0 0 0 968.97 884.50Z M1001.29 885.35A55 55 0 0 1 1020.63 911.96L1011.15 915.15A45 45 0 0 0 995.33 893.37Z M1020.98 913.05A55 55 0 0 1 1021.10 945.58L1011.53 942.66A45 45 0 0 0 1011.44 916.04Z" fill="#c4c4c4"/>
<text x="968.5" y="935" font-size="17" fill="#ececec" text-anchor="middle">77.23</text>
<text x="968.5" y="953" font-size="10.5" fill="#168484" text-anchor="middle">DOWN</text>
<circle cx="1098.5" cy="929.5" r="55" fill="#393939"/>
<circle cx="1098.5" cy="929.5" r="40.5" fill="#363636"/>
<path d="M1099.08 874.50A55 55 0 0 1 1130.36 884.67L1124.57 892.82A45 45 0 0 0 1098.97 884.50Z M1131.29 885.35A55 55 0 0 1 1150.63 911.96L1141.15 915.15A45 45 0 0 0 1125.33 893.37Z M1150.98 913.05A55 55 0 0 1 1150.98 945.95L1141.44 942.96A45 45 0 0 0 1141.44 916.04Z M1150.63 947.04A55 55 0 0 1 1131.60 973.42L1125.58 965.44A45 45 0 0 0 1141.15 943.85Z" fill="#c4c4c4"/>
<text x="1098.5" y="935" font-size="17" fill="#ececec" text-anchor="middle">67.25</text>
<text x="1098.5" y="953" font-size="10.5" fill="#168484" text-anchor="middle">VOLUME</text>
<text x="1237" y="891" font-size="12.5" fill="#dddddd" letter-spacing="-0.294">PNL (%)</text>
<rect x="1236" y="904" width="230" height="7" fill="#1e88e5" />
<rect x="1237" y="905" width="228" height="5" fill="#2196f3" />
<text x="1476" y="914" font-size="9.5" fill="#eeeeee" letter-spacing="0.575">100</text>
<rect x="1238" y="926" width="80" height="19" fill="#393939" />
<text x="1238" y="938" font-size="12.5" fill="#dddddd" letter-spacing="0.001">Gross Profit</text>
<text x="1239" y="962" font-size="15" fill="#2196f3" letter-spacing="0.424">100.00</text>
<rect x="1338" y="926" width="70" height="19" fill="#393939" />
<text x="1338" y="938" font-size="12.5" fill="#dddddd" letter-spacing="-0.468">Gross Loss</text>
<text x="1339" y="962" font-size="15" fill="#e00000" letter-spacing="0.268">0.00</text>
<rect x="1438" y="926" width="60" height="19" fill="#393939" />
<text x="1438" y="938" font-size="12.5" fill="#dddddd" textLength="53.00" lengthAdjust="spacingAndGlyphs">PnL (USD)</text>
<text x="1439" y="962" font-size="15" fill="#2196f3" letter-spacing="0.366">4.950</text>
<rect x="1359" y="977" width="11" height="11" fill="#ffffff" />
<text x="1377" y="988" font-size="12.5" fill="#5e5e5e" letter-spacing="0.006">Multiselection Symbol</text>
<rect x="1519" y="977" width="11" height="11" fill="#ffffff" />
<text x="1536" y="988" font-size="12.5" fill="#5e5e5e" letter-spacing="-0.459">Spike Catcher</text>
<rect x="1639" y="977" width="11" height="11" fill="#ffffff" />
<text x="1656" y="988" font-size="12.5" fill="#5e5e5e" letter-spacing="0.159">Market Indicator</text>
<rect x="1518" y="861" width="100" height="100" fill="#393939" />
<text x="1568" y="876" font-size="12.5" fill="#5a5a5a" text-anchor="middle">Reversing</text>
<text x="1568" y="896" font-size="12.5" fill="#5a5a5a" text-anchor="middle">Buying</text>
<text x="1568" y="916" font-size="12.5" fill="#5a5a5a" text-anchor="middle">Selling</text>
<text x="1574" y="936.5" font-size="12.5" fill="#5a5a5a" text-anchor="middle">Place Order</text>
<text x="1568" y="956" font-size="12.5" fill="#5a5a5a" text-anchor="middle">Close All</text>
<rect x="1639" y="862" width="11" height="11" fill="#ffffff" />
<path d="M1641 867.5l2.8 3l4.5-6" fill="none" stroke="#333" stroke-width="1.3"/>
<text x="1656" y="873" font-size="12.5" fill="#f0f000">MA</text>
<rect x="1639" y="877" width="11" height="11" fill="#ffffff" />
<text x="1656" y="888" font-size="12.5" fill="#5e5e5e">BB</text>
<rect x="1639" y="892" width="11" height="11" fill="#ffffff" />
<path d="M1641 897.5l2.8 3l4.5-6" fill="none" stroke="#333" stroke-width="1.3"/>
<text x="1656" y="903" font-size="12.5" fill="#f0f000">RSI</text>
<rect x="1639" y="907" width="11" height="11" fill="#ffffff" />
<text x="1656" y="918" font-size="12.5" fill="#5e5e5e">IChimoku</text>
<rect x="1639" y="922" width="11" height="11" fill="#ffffff" />
<text x="1656" y="933" font-size="12.5" fill="#5e5e5e">Heiken Ashi</text>
<rect x="1639" y="937" width="11" height="11" fill="#ffffff" />
<text x="1656" y="948" font-size="12.5" fill="#5e5e5e">Price Profil</text>
<rect x="1639" y="952" width="11" height="11" fill="#ffffff" />
<text x="1656" y="963" font-size="12.5" fill="#5e5e5e">SMC zones</text>
<rect x="1729" y="862" width="11" height="11" fill="#ffffff" />
<text x="1746" y="873" font-size="12.5" fill="#5e5e5e">Auto TP-SL</text>
<rect x="1729" y="877" width="11" height="11" fill="#ffffff" />
<path d="M1731 882.5l2.8 3l4.5-6" fill="none" stroke="#333" stroke-width="1.3"/>
<text x="1746" y="888" font-size="12.5" fill="#f0f000">Zig Zag</text>
<rect x="1729" y="892" width="11" height="11" fill="#ffffff" />
<text x="1746" y="903" font-size="12.5" fill="#5e5e5e">MACD</text>
<rect x="1729" y="907" width="11" height="11" fill="#ffffff" />
<text x="1746" y="918" font-size="12.5" fill="#5e5e5e">Stochastic.</text>
<rect x="1729" y="922" width="11" height="11" fill="#ffffff" />
<text x="1746" y="933" font-size="12.5" fill="#5e5e5e">Deep ADX</text>
<rect x="1729" y="937" width="11" height="11" fill="#ffffff" />
<path d="M1731 942.5l2.8 3l4.5-6" fill="none" stroke="#333" stroke-width="1.3"/>
<text x="1746" y="948" font-size="12.5" fill="#3d9df5">Fibonacci(%)</text>
<rect x="1729" y="952" width="11" height="11" fill="#ffffff" />
<text x="1746" y="963" font-size="12.5" fill="#5e5e5e">SNR</text>
<rect x="26" y="977" width="11" height="11" fill="#ffffff" />
<text x="43" y="988" font-size="12.5" fill="#5e5e5e" letter-spacing="-0.063">Main Chart Mode</text>
<rect x="151" y="977" width="11" height="11" fill="#ffffff" />
<path d="M153 982.5l2.8 3l4.5-6" fill="none" stroke="#333" stroke-width="1.3"/>
<text x="168" y="988" font-size="12.5" fill="#f0f0f0" letter-spacing="-0.233">Sub Chart Mode</text>
<rect x="271" y="977" width="11" height="11" fill="#ffffff" />
<text x="288" y="988" font-size="12.5" fill="#5e5e5e" letter-spacing="-0.113">Price scale</text>
<rect x="371" y="977" width="11" height="11" fill="#ffffff" />
<text x="388" y="988" font-size="12.5" fill="#5e5e5e" letter-spacing="-0.229">Date scale</text>
<rect x="461" y="977" width="11" height="11" fill="#ffffff" />
<text x="478" y="988" font-size="12.5" fill="#5e5e5e" letter-spacing="0.104">Chart shift</text>
<rect x="561" y="977" width="11" height="11" fill="#ffffff" />
<path d="M563 982.5l2.8 3l4.5-6" fill="none" stroke="#333" stroke-width="1.3"/>
<text x="578" y="988" font-size="12.5" fill="#3d9df5" letter-spacing="-0.445">Launch Buy/Sell TP</text>
<rect x="9" y="996" width="1819" height="22" fill="#3a3a3a" />
<text x="18" y="1013" font-size="12.5" fill="#5a5a5a" letter-spacing="-0.209">Gold vs US Dollar</text>
<rect x="1177" y="1001" width="2" height="15" fill="#e0e0e0" />
<text x="1183" y="1013" font-size="12.5" fill="#5a5a5a" letter-spacing="-0.068">Deposit load: 17.33/1.10%</text>
<rect x="1377" y="1001" width="2" height="15" fill="#e0e0e0" />
<text x="1383" y="1013" font-size="12.5" fill="#5a5a5a" letter-spacing="-0.094">2026.04.02 09:46:07</text>
<rect x="1527" y="1001" width="2" height="15" fill="#e0e0e0" />
<text x="1533" y="1013" font-size="12.5" fill="#5a5a5a" letter-spacing="0.009">Trend Indicators</text>
<line x1="9" y1="1021.5" x2="1828" y2="1021.5" stroke="#5a5a5a" stroke-width="1" />
<rect x="0" y="1030" width="1920" height="50" fill="#3a3a3a" />
<path d="M21 1048l8-1.2v8h-8zM30.5 1046.6l10-1.5v10.4h-10zM21 1056.5h8v8l-8-1.2zM30.5 1056.5h10v10.4l-10-1.5z" fill="#ffffff"/>
<rect x="60" y="1030" width="430" height="50" fill="#f0f0f0" />
<line x1="60" y1="1030.5" x2="490" y2="1030.5" stroke="#c8c8c8" stroke-width="1" />
<circle cx="86" cy="1052" r="6.8" fill="none" stroke="#222" stroke-width="1.5"/><path d="M81.2 1056.8L75.5 1064" stroke="#222" stroke-width="1.7"/>
<text x="110" y="1062" font-size="18" fill="#222" letter-spacing="0.496">Taper ici pour rechercher</text>
<circle cx="520" cy="1055" r="9" fill="none" stroke="#fff" stroke-width="2"/>
<path d="M569 1047h12v16h-12zM586 1047v16M572 1045h6M572 1065h6M589 1045v3M589 1062v3" fill="none" stroke="#fff" stroke-width="1.5"/>
<defs><linearGradient id="edg" x1="0" y1="0" x2="1" y2="0.6"><stop offset="0" stop-color="#2a9be0"/><stop offset="0.55" stop-color="#34b3d8"/><stop offset="1" stop-color="#5fd65a"/></linearGradient></defs>
<circle cx="644" cy="1055" r="15" fill="url(#edg)"/><path d="M629.5 1058c1-6 7-9 12-8c5 1 8 4 8 7c0 3-3 4-5 4c-3 0-4-2-4-2c-1 4 2 8 7 9c4 1 7 0 10-2a15 15 0 0 1-28-8z" fill="#1565c0"/><circle cx="648" cy="1057" r="3.8" fill="#3a3a3a"/>
<circle cx="706" cy="1055" r="14" fill="#2aa3dd"/><path d="M698 1055l15-6-3 14-5-4-3 3v-4l7-6-9 5z" fill="#fff"/>
<ellipse cx="768" cy="1055" rx="14" ry="15" fill="#e0141e"/><ellipse cx="768" cy="1055" rx="6" ry="11" fill="#3a3a3a"/>
<path d="M816 1043h9l2 2h16v21h-27z" fill="#e5a50a"/><rect x="816" y="1047" width="27" height="19" rx="1" fill="#ffd45e"/><path d="M822 1066v-9a2 2 0 0 1 2-2h13a2 2 0 0 1 2 2v9h-4v-6h-9v6z" fill="#3a86d0"/>
<path d="M877 1047h29v22h-29z" fill="#fff"/><path d="M885 1047v-2.5a6 5 0 0 1 12 0v2.5" fill="none" stroke="#fff" stroke-width="1.5"/><rect x="885" y="1052" width="6" height="6" fill="#f35325"/><rect x="892" y="1052" width="6" height="6" fill="#81bc06"/><rect x="885" y="1059" width="6" height="6" fill="#05a6f0"/><rect x="892" y="1059" width="6" height="6" fill="#ffba08"/>
<path d="M939 1050L954 1042.5L969 1050V1066H939Z" fill="#fff"/><path d="M939.5 1050.5L963 1061.5L957 1055L968.5 1050.5" fill="none" stroke="#3a3a3a" stroke-width="1.6"/>
<path d="M1007 1040.5l22 2v18l-22-1z" fill="#d8d8d8" stroke="#aaa" stroke-width="0.8"/><path d="M1008.5 1042.5l19 1.5v15l-19-1z" fill="#1a2fc0"/><rect x="1001" y="1046" width="23" height="9" fill="#cfe3f7" stroke="#6a9ad0" stroke-width="0.8"/><path d="M1003 1049h19M1003 1052h19" stroke="#6a9ad0" stroke-width="0.8" stroke-dasharray="1.5 1"/><ellipse cx="1019" cy="1066" rx="7" ry="2.6" fill="#cfcfcf"/><path d="M1017 1060v4h4v-4" fill="#bbb"/>
<rect x="1079" y="1045" width="12" height="20" fill="#fff" stroke="#2b579a" stroke-width="1"/><path d="M1082 1049h7M1082 1052.5h7M1082 1056h7M1082 1059.5h7" stroke="#2b579a" stroke-width="1.3"/><path d="M1064 1044l16-3v27l-16-3z" fill="#2b579a"/><text x="1071.5" y="1060" font-size="11.5" font-weight="bold" fill="#fff" text-anchor="middle">W</text>
<path d="M1126 1058c-2-8 8-13 16-12c8 1 12 6 10 11c-1 4-6 3-8 6c-2 3 0 6-4 6c-5 0-12-5-14-11z" fill="#c9e2f5" stroke="#9cc" stroke-width="0.6"/><circle cx="1130" cy="1056" r="2.2" fill="#e44"/><circle cx="1134.5" cy="1051" r="2.2" fill="#5c5"/><circle cx="1141" cy="1049" r="2.2" fill="#eb3"/><circle cx="1137" cy="1058" r="1.6" fill="#3a3a3a"/><path d="M1141 1069L1152 1046" stroke="#e08a20" stroke-width="2.2"/><path d="M1150 1047l3-6 3 3-4 4z" fill="#d9b070"/>
<rect x="1177" y="1077" width="51" height="3" fill="#dcf5a8" />
<path d="M1188 1050l6-1v13l-6 1z" fill="#cfcfcf"/><path d="M1195 1044l20 2v16l-20-1z" fill="#e0e0e0" stroke="#aaa" stroke-width="0.8"/><path d="M1196.5 1046l17 1.5v13l-17-1z" fill="#d3e9f8"/><path d="M1197 1055l3-1 2-4 2 6 2-1 2-3 2 3h4" fill="none" stroke="#3a7bc0" stroke-width="0.9"/><ellipse cx="1203" cy="1066" rx="6" ry="2.4" fill="#cfcfcf"/><rect x="1201" y="1061" width="4" height="4" fill="#bbb"/>
<rect x="1234" y="1030" width="61" height="50" fill="#626262" />
<rect x="1234" y="1077" width="61" height="3" fill="#dcf5a8" />
<circle cx="1264" cy="1055" r="15" fill="#fe3f4e"/><ellipse cx="1262.6" cy="1058" rx="4.6" ry="4.2" fill="none" stroke="#fff" stroke-width="3"/><path d="M1269.6 1046.5L1267.9 1061" stroke="#fff" stroke-width="3" stroke-linecap="round"/>
<path d="M1495 1059l7-6 4 3 8-7h-4l2-2h8v8l-2 2v-4l-10 9-4-3-5 5z" fill="#5fd35f"/><path d="M1495 1059l7-6 4 3-3 3-2-1-4 4z" fill="#2a9a3a"/>
<text x="1534" y="1062" font-size="17.5" fill="#fff" textLength="48.00" lengthAdjust="spacingAndGlyphs">SWDY</text>
<path d="M1604 1062l8-8 8 8" fill="none" stroke="#fff" stroke-width="1.5"/>
<rect x="1635.5" y="1051.5" width="17" height="9" fill="none" stroke="#fff" stroke-width="1.4"/><rect x="1637" y="1053" width="14" height="6" fill="#fff"/><rect x="1653" y="1054" width="2" height="4" fill="#fff"/><path d="M1633 1050v4M1636 1050v4" stroke="#fff"/>
<path d="M1666 1062a14 14 0 0 1 14-14M1669 1062a11 11 0 0 1 11-11M1672 1062a8 8 0 0 1 8-8" fill="none" stroke="#fff" stroke-width="1.3"/><circle cx="1679" cy="1061" r="1.5" fill="#fff"/>
<path d="M1692 1052h4l5-5v17l-5-5h-4z" fill="none" stroke="#fff" stroke-width="1.3"/><path d="M1704 1052a4 4 0 0 1 0 7M1707 1049a8 8 0 0 1 0 13" fill="none" stroke="#bbb" stroke-width="1.2"/>
<text x="1726" y="1062" font-size="15.5" fill="#fff" textLength="27.00" lengthAdjust="spacingAndGlyphs">FRA</text>
<text x="1808" y="1048" font-size="15.5" fill="#fff" text-anchor="middle">12:46</text>
<text x="1808" y="1072" font-size="15.5" fill="#fff" text-anchor="middle">02/04/2026</text>
<path d="M1869 1045h19v14h-11l-3 4v-4h-5z" fill="#fff"/><path d="M1872 1049h13M1872 1052h13M1872 1055h9" stroke="#3a3a3a"/><circle cx="1888" cy="1064" r="8.5" fill="#3a3a3a" stroke="#bbb" stroke-width="1.2"/><text x="1888" y="1069" font-size="11" fill="#fff" text-anchor="middle">1</text>
<line x1="1914.5" y1="1030" x2="1914.5" y2="1080" stroke="#666" stroke-width="1" /></svg></body></html>
